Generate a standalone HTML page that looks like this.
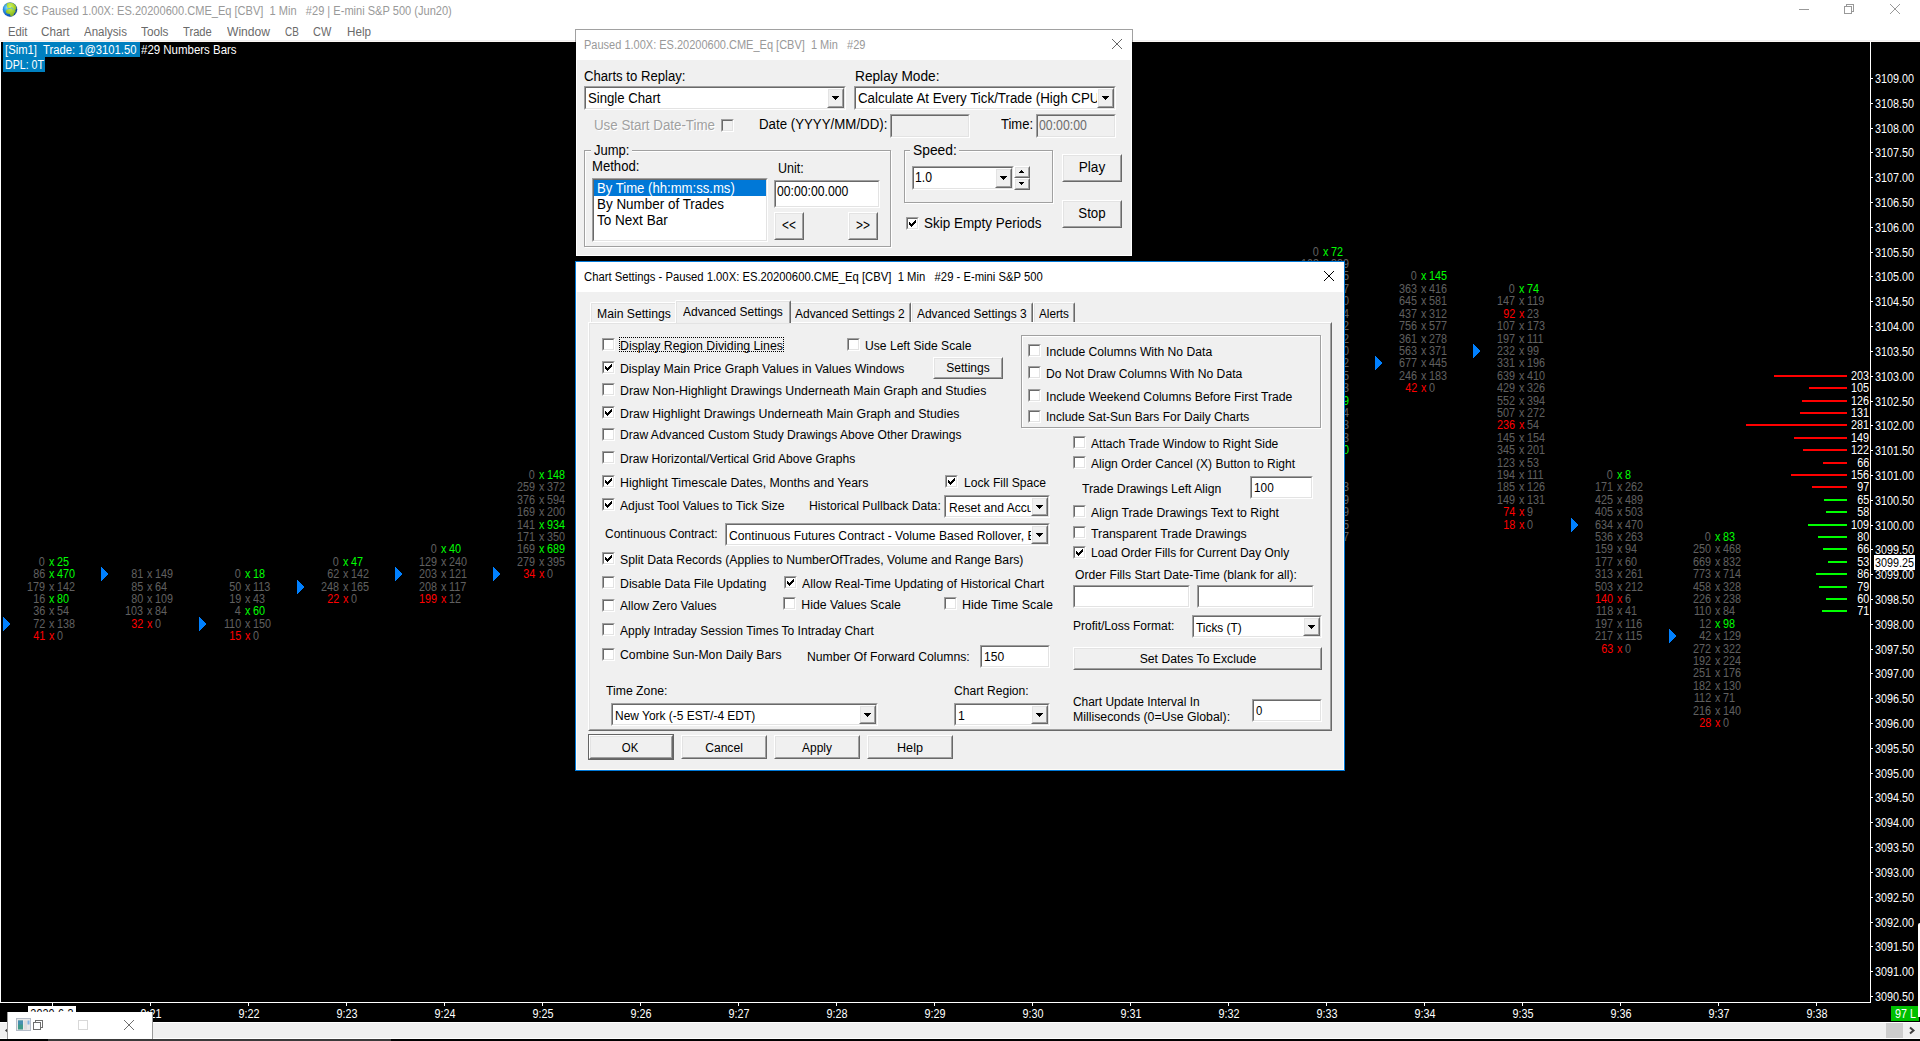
<!DOCTYPE html>
<html><head><meta charset="utf-8"><title>SC Paused 1.00X</title><style>
html,body{margin:0;padding:0;background:#000;}
body{width:1920px;height:1041px;overflow:hidden;position:relative;font-family:"Liberation Sans",sans-serif;}
.b{position:absolute;}
.t{position:absolute;white-space:pre;line-height:16px;display:inline-block;}
.sk{box-sizing:border-box;border:1px solid;border-color:#a0a0a0 #fff #fff #a0a0a0;}
.sk>div{width:100%;height:100%;box-sizing:border-box;border:1px solid;border-color:#696969 #e3e3e3 #e3e3e3 #696969;}
.rs{box-sizing:border-box;border:1px solid;border-color:#fff #696969 #696969 #fff;background:#f0f0f0}
.rs>div{width:100%;height:100%;box-sizing:border-box;border:1px solid;border-color:#e3e3e3 #a0a0a0 #a0a0a0 #e3e3e3;}
</style></head><body>
<div class="b" style="left:0;top:0;width:1920px;height:42px;background:#fff"></div>
<div class="b" style="left:0px;top:40px;width:1920px;height:1px;background:#f0f0f0;"></div>
<div class="b" style="left:0px;top:41px;width:1920px;height:1px;background:#fbf6f3;"></div>
<svg class="b" style="left:2px;top:1px" width="17" height="18" viewBox="0 0 17 18">
<defs>
<radialGradient id="gl" cx="0.32" cy="0.36" r="0.72"><stop offset="0" stop-color="#8fe0ff"/><stop offset="0.35" stop-color="#2f9be8"/><stop offset="0.75" stop-color="#0f5fc0"/><stop offset="1" stop-color="#0a3a92"/></radialGradient>
<radialGradient id="gg" cx="0.42" cy="0.3" r="0.8"><stop offset="0" stop-color="#d2f65a"/><stop offset="0.5" stop-color="#a4d02c"/><stop offset="1" stop-color="#6f9a1a"/></radialGradient>
<clipPath id="gc"><circle cx="8" cy="8.550" r="7.100"/></clipPath>
</defs>
<circle cx="8" cy="8.550" r="7.150" fill="url(#gl)"/>
<g clip-path="url(#gc)">
<path d="M5.0 2.2L7.0 1.2L10.0 1.2L12.6 2.6L14.3 5.4L14.5 7.8L13.7 8.4L13.3 9.6L13.7 10.9L12.4 11.9L11.6 14.0L10.6 15.7L8.7 16.0L8.3 14.2L7.8 12.9L6.0 12.7L4.3 11.9L3.8 10.2L4.7 8.7L6.0 8.2L5.6 7.2L5.0 5.6L4.8 3.6z" fill="url(#gg)"/>
<path d="M2.3 3.8L3.8 2.4L4.2 3.2L3.0 4.6z" fill="#a8d840" opacity="0.800"/>
<path d="M6.2 7.7L8.4 7.5L9.2 6.7L10.1 6.9L10.5 8.0L11.5 8.7" fill="none" stroke="#56b6de" stroke-width="1" stroke-linejoin="round" stroke-linecap="round"/>
<ellipse cx="8.2" cy="4.3" rx="0.700" ry="0.450" fill="#7fd0c8" opacity="0.700"/>
</g>
<circle cx="8" cy="8.550" r="7.100" fill="none" stroke="#1a4a9a" stroke-opacity="0.350" stroke-width="0.600"/>
</svg>
<span class="t" style="top:3px;font-size:12px;color:#999;left:23.4px;transform:scaleX(0.9218);transform-origin:0 50%;">SC Paused 1.00X: ES.20200600.CME_Eq [CBV]  1 Min   #29 | E-mini S&amp;P 500 (Jun20)</span>
<span class="t" style="top:24px;font-size:12px;color:#6a6a6a;left:7.5px;transform:scaleX(0.9382);transform-origin:0 50%;">Edit</span>
<span class="t" style="top:24px;font-size:12px;color:#6a6a6a;left:41.3px;transform:scaleX(0.9712);transform-origin:0 50%;">Chart</span>
<span class="t" style="top:24px;font-size:12px;color:#6a6a6a;left:84px;transform:scaleX(0.9601);transform-origin:0 50%;">Analysis</span>
<span class="t" style="top:24px;font-size:12px;color:#6a6a6a;left:141.3px;transform:scaleX(0.9816);transform-origin:0 50%;">Tools</span>
<span class="t" style="top:24px;font-size:12px;color:#6a6a6a;left:183.1px;transform:scaleX(0.9319);transform-origin:0 50%;">Trade</span>
<span class="t" style="top:24px;font-size:12px;color:#6a6a6a;left:226.8px;transform:scaleX(1.0075);transform-origin:0 50%;">Window</span>
<span class="t" style="top:24px;font-size:12px;color:#6a6a6a;left:284.7px;transform:scaleX(0.8278);transform-origin:0 50%;">CB</span>
<span class="t" style="top:24px;font-size:12px;color:#6a6a6a;left:313.4px;transform:scaleX(0.9154);transform-origin:0 50%;">CW</span>
<span class="t" style="top:24px;font-size:12px;color:#6a6a6a;left:346.6px;transform:scaleX(0.9724);transform-origin:0 50%;">Help</span>
<div class="b" style="left:1799px;top:9px;width:10px;height:1px;background:#999;"></div>
<svg class="b" style="left:1843px;top:3px" width="12" height="12" viewBox="0 0 12 12" shape-rendering="crispEdges"><path d="M3.500 3.500V1.500H10.500V8.500H8.500" fill="none" stroke="#999"/><rect x="1.500" y="3.500" width="7" height="7" fill="none" stroke="#999"/></svg>
<svg class="b" style="left:1889px;top:3px" width="12" height="12" viewBox="-6 -6 12 12"><path d="M-5 -5L5 5M5 -5L-5 5" stroke="#999" stroke-width="1" fill="none"/></svg>
<div class="b" style="left:0px;top:42px;width:1920px;height:980px;background:#000;"></div>
<div class="b" style="left:0px;top:42px;width:1px;height:961px;background:#fff;"></div>
<div class="b" style="left:3px;top:42px;width:137px;height:15px;background:#0080c0;"></div>
<div class="b" style="left:3px;top:57px;width:42px;height:15px;background:#0080c0;"></div>
<span class="t" style="top:42px;font-size:12px;color:#fff;left:4.8px;transform:scaleX(0.9375);transform-origin:0 50%;">[Sim1]  Trade: 1@3101.50</span>
<span class="t" style="top:42px;font-size:12px;color:#fff;left:141.3px;transform:scaleX(0.9556);transform-origin:0 50%;">#29 Numbers Bars</span>
<span class="t" style="top:57px;font-size:12px;color:#fff;left:4.8px;transform:scaleX(0.886);transform-origin:0 50%;">DPL: 0T</span>
<div class="b" style="left:1870px;top:42px;width:1px;height:961px;background:#fff;"></div>
<div class="b" style="left:1871px;top:78px;width:2px;height:1px;background:#fff;"></div>
<span class="t" style="top:71px;font-size:12px;color:#fff;left:1875px;transform:scaleX(0.8991);transform-origin:0 50%;">3109.00</span>
<div class="b" style="left:1871px;top:103px;width:2px;height:1px;background:#fff;"></div>
<span class="t" style="top:96px;font-size:12px;color:#fff;left:1875px;transform:scaleX(0.8991);transform-origin:0 50%;">3108.50</span>
<div class="b" style="left:1871px;top:128px;width:2px;height:1px;background:#fff;"></div>
<span class="t" style="top:121px;font-size:12px;color:#fff;left:1875px;transform:scaleX(0.8991);transform-origin:0 50%;">3108.00</span>
<div class="b" style="left:1871px;top:152px;width:2px;height:1px;background:#fff;"></div>
<span class="t" style="top:145px;font-size:12px;color:#fff;left:1875px;transform:scaleX(0.8991);transform-origin:0 50%;">3107.50</span>
<div class="b" style="left:1871px;top:177px;width:2px;height:1px;background:#fff;"></div>
<span class="t" style="top:170px;font-size:12px;color:#fff;left:1875px;transform:scaleX(0.8991);transform-origin:0 50%;">3107.00</span>
<div class="b" style="left:1871px;top:202px;width:2px;height:1px;background:#fff;"></div>
<span class="t" style="top:195px;font-size:12px;color:#fff;left:1875px;transform:scaleX(0.8991);transform-origin:0 50%;">3106.50</span>
<div class="b" style="left:1871px;top:227px;width:2px;height:1px;background:#fff;"></div>
<span class="t" style="top:220px;font-size:12px;color:#fff;left:1875px;transform:scaleX(0.8991);transform-origin:0 50%;">3106.00</span>
<div class="b" style="left:1871px;top:252px;width:2px;height:1px;background:#fff;"></div>
<span class="t" style="top:245px;font-size:12px;color:#fff;left:1875px;transform:scaleX(0.8991);transform-origin:0 50%;">3105.50</span>
<div class="b" style="left:1871px;top:276px;width:2px;height:1px;background:#fff;"></div>
<span class="t" style="top:269px;font-size:12px;color:#fff;left:1875px;transform:scaleX(0.8991);transform-origin:0 50%;">3105.00</span>
<div class="b" style="left:1871px;top:301px;width:2px;height:1px;background:#fff;"></div>
<span class="t" style="top:294px;font-size:12px;color:#fff;left:1875px;transform:scaleX(0.8991);transform-origin:0 50%;">3104.50</span>
<div class="b" style="left:1871px;top:326px;width:2px;height:1px;background:#fff;"></div>
<span class="t" style="top:319px;font-size:12px;color:#fff;left:1875px;transform:scaleX(0.8991);transform-origin:0 50%;">3104.00</span>
<div class="b" style="left:1871px;top:351px;width:2px;height:1px;background:#fff;"></div>
<span class="t" style="top:344px;font-size:12px;color:#fff;left:1875px;transform:scaleX(0.8991);transform-origin:0 50%;">3103.50</span>
<div class="b" style="left:1871px;top:376px;width:2px;height:1px;background:#fff;"></div>
<span class="t" style="top:369px;font-size:12px;color:#fff;left:1875px;transform:scaleX(0.8991);transform-origin:0 50%;">3103.00</span>
<div class="b" style="left:1871px;top:401px;width:2px;height:1px;background:#fff;"></div>
<span class="t" style="top:394px;font-size:12px;color:#fff;left:1875px;transform:scaleX(0.8991);transform-origin:0 50%;">3102.50</span>
<div class="b" style="left:1871px;top:425px;width:2px;height:1px;background:#fff;"></div>
<span class="t" style="top:418px;font-size:12px;color:#fff;left:1875px;transform:scaleX(0.8991);transform-origin:0 50%;">3102.00</span>
<div class="b" style="left:1871px;top:450px;width:2px;height:1px;background:#fff;"></div>
<span class="t" style="top:443px;font-size:12px;color:#fff;left:1875px;transform:scaleX(0.8991);transform-origin:0 50%;">3101.50</span>
<div class="b" style="left:1871px;top:475px;width:2px;height:1px;background:#fff;"></div>
<span class="t" style="top:468px;font-size:12px;color:#fff;left:1875px;transform:scaleX(0.8991);transform-origin:0 50%;">3101.00</span>
<div class="b" style="left:1871px;top:500px;width:2px;height:1px;background:#fff;"></div>
<span class="t" style="top:493px;font-size:12px;color:#fff;left:1875px;transform:scaleX(0.8991);transform-origin:0 50%;">3100.50</span>
<div class="b" style="left:1871px;top:525px;width:2px;height:1px;background:#fff;"></div>
<span class="t" style="top:518px;font-size:12px;color:#fff;left:1875px;transform:scaleX(0.8991);transform-origin:0 50%;">3100.00</span>
<div class="b" style="left:1871px;top:549px;width:2px;height:1px;background:#fff;"></div>
<span class="t" style="top:542px;font-size:12px;color:#fff;left:1875px;transform:scaleX(0.8991);transform-origin:0 50%;">3099.50</span>
<div class="b" style="left:1871px;top:574px;width:2px;height:1px;background:#fff;"></div>
<span class="t" style="top:567px;font-size:12px;color:#fff;left:1875px;transform:scaleX(0.8991);transform-origin:0 50%;">3099.00</span>
<div class="b" style="left:1871px;top:599px;width:2px;height:1px;background:#fff;"></div>
<span class="t" style="top:592px;font-size:12px;color:#fff;left:1875px;transform:scaleX(0.8991);transform-origin:0 50%;">3098.50</span>
<div class="b" style="left:1871px;top:624px;width:2px;height:1px;background:#fff;"></div>
<span class="t" style="top:617px;font-size:12px;color:#fff;left:1875px;transform:scaleX(0.8991);transform-origin:0 50%;">3098.00</span>
<div class="b" style="left:1871px;top:649px;width:2px;height:1px;background:#fff;"></div>
<span class="t" style="top:642px;font-size:12px;color:#fff;left:1875px;transform:scaleX(0.8991);transform-origin:0 50%;">3097.50</span>
<div class="b" style="left:1871px;top:673px;width:2px;height:1px;background:#fff;"></div>
<span class="t" style="top:666px;font-size:12px;color:#fff;left:1875px;transform:scaleX(0.8991);transform-origin:0 50%;">3097.00</span>
<div class="b" style="left:1871px;top:698px;width:2px;height:1px;background:#fff;"></div>
<span class="t" style="top:691px;font-size:12px;color:#fff;left:1875px;transform:scaleX(0.8991);transform-origin:0 50%;">3096.50</span>
<div class="b" style="left:1871px;top:723px;width:2px;height:1px;background:#fff;"></div>
<span class="t" style="top:716px;font-size:12px;color:#fff;left:1875px;transform:scaleX(0.8991);transform-origin:0 50%;">3096.00</span>
<div class="b" style="left:1871px;top:748px;width:2px;height:1px;background:#fff;"></div>
<span class="t" style="top:741px;font-size:12px;color:#fff;left:1875px;transform:scaleX(0.8991);transform-origin:0 50%;">3095.50</span>
<div class="b" style="left:1871px;top:773px;width:2px;height:1px;background:#fff;"></div>
<span class="t" style="top:766px;font-size:12px;color:#fff;left:1875px;transform:scaleX(0.8991);transform-origin:0 50%;">3095.00</span>
<div class="b" style="left:1871px;top:797px;width:2px;height:1px;background:#fff;"></div>
<span class="t" style="top:790px;font-size:12px;color:#fff;left:1875px;transform:scaleX(0.8991);transform-origin:0 50%;">3094.50</span>
<div class="b" style="left:1871px;top:822px;width:2px;height:1px;background:#fff;"></div>
<span class="t" style="top:815px;font-size:12px;color:#fff;left:1875px;transform:scaleX(0.8991);transform-origin:0 50%;">3094.00</span>
<div class="b" style="left:1871px;top:847px;width:2px;height:1px;background:#fff;"></div>
<span class="t" style="top:840px;font-size:12px;color:#fff;left:1875px;transform:scaleX(0.8991);transform-origin:0 50%;">3093.50</span>
<div class="b" style="left:1871px;top:872px;width:2px;height:1px;background:#fff;"></div>
<span class="t" style="top:865px;font-size:12px;color:#fff;left:1875px;transform:scaleX(0.8991);transform-origin:0 50%;">3093.00</span>
<div class="b" style="left:1871px;top:897px;width:2px;height:1px;background:#fff;"></div>
<span class="t" style="top:890px;font-size:12px;color:#fff;left:1875px;transform:scaleX(0.8991);transform-origin:0 50%;">3092.50</span>
<div class="b" style="left:1871px;top:922px;width:2px;height:1px;background:#fff;"></div>
<span class="t" style="top:915px;font-size:12px;color:#fff;left:1875px;transform:scaleX(0.8991);transform-origin:0 50%;">3092.00</span>
<div class="b" style="left:1871px;top:946px;width:2px;height:1px;background:#fff;"></div>
<span class="t" style="top:939px;font-size:12px;color:#fff;left:1875px;transform:scaleX(0.8991);transform-origin:0 50%;">3091.50</span>
<div class="b" style="left:1871px;top:971px;width:2px;height:1px;background:#fff;"></div>
<span class="t" style="top:964px;font-size:12px;color:#fff;left:1875px;transform:scaleX(0.8991);transform-origin:0 50%;">3091.00</span>
<div class="b" style="left:1871px;top:996px;width:2px;height:1px;background:#fff;"></div>
<span class="t" style="top:989px;font-size:12px;color:#fff;left:1875px;transform:scaleX(0.8991);transform-origin:0 50%;">3090.50</span>
<div class="b" style="left:1874px;top:555px;width:41px;height:15px;background:#fff;"></div>
<span class="t" style="top:555px;font-size:12px;color:#000;left:1875px;transform:scaleX(0.8991);transform-origin:0 50%;">3099.25</span>
<div class="b" style="left:0px;top:1002px;width:1871px;height:1px;background:#fff;"></div>
<div class="b" style="left:52px;top:1003px;width:1px;height:3px;background:#fff;"></div>
<div class="b" style="left:150px;top:1003px;width:1px;height:3px;background:#fff;"></div>
<span class="t" style="top:1006px;font-size:12px;color:#fff;left:1px;width:300px;text-align:center;transform:scaleX(0.9);transform-origin:50% 50%;">9:21</span>
<div class="b" style="left:248px;top:1003px;width:1px;height:3px;background:#fff;"></div>
<span class="t" style="top:1006px;font-size:12px;color:#fff;left:99px;width:300px;text-align:center;transform:scaleX(0.9);transform-origin:50% 50%;">9:22</span>
<div class="b" style="left:346px;top:1003px;width:1px;height:3px;background:#fff;"></div>
<span class="t" style="top:1006px;font-size:12px;color:#fff;left:197px;width:300px;text-align:center;transform:scaleX(0.9);transform-origin:50% 50%;">9:23</span>
<div class="b" style="left:444px;top:1003px;width:1px;height:3px;background:#fff;"></div>
<span class="t" style="top:1006px;font-size:12px;color:#fff;left:295px;width:300px;text-align:center;transform:scaleX(0.9);transform-origin:50% 50%;">9:24</span>
<div class="b" style="left:542px;top:1003px;width:1px;height:3px;background:#fff;"></div>
<span class="t" style="top:1006px;font-size:12px;color:#fff;left:393px;width:300px;text-align:center;transform:scaleX(0.9);transform-origin:50% 50%;">9:25</span>
<div class="b" style="left:640px;top:1003px;width:1px;height:3px;background:#fff;"></div>
<span class="t" style="top:1006px;font-size:12px;color:#fff;left:491px;width:300px;text-align:center;transform:scaleX(0.9);transform-origin:50% 50%;">9:26</span>
<div class="b" style="left:738px;top:1003px;width:1px;height:3px;background:#fff;"></div>
<span class="t" style="top:1006px;font-size:12px;color:#fff;left:589px;width:300px;text-align:center;transform:scaleX(0.9);transform-origin:50% 50%;">9:27</span>
<div class="b" style="left:836px;top:1003px;width:1px;height:3px;background:#fff;"></div>
<span class="t" style="top:1006px;font-size:12px;color:#fff;left:687px;width:300px;text-align:center;transform:scaleX(0.9);transform-origin:50% 50%;">9:28</span>
<div class="b" style="left:934px;top:1003px;width:1px;height:3px;background:#fff;"></div>
<span class="t" style="top:1006px;font-size:12px;color:#fff;left:785px;width:300px;text-align:center;transform:scaleX(0.9);transform-origin:50% 50%;">9:29</span>
<div class="b" style="left:1032px;top:1003px;width:1px;height:3px;background:#fff;"></div>
<span class="t" style="top:1006px;font-size:12px;color:#fff;left:883px;width:300px;text-align:center;transform:scaleX(0.9);transform-origin:50% 50%;">9:30</span>
<div class="b" style="left:1130px;top:1003px;width:1px;height:3px;background:#fff;"></div>
<span class="t" style="top:1006px;font-size:12px;color:#fff;left:981px;width:300px;text-align:center;transform:scaleX(0.9);transform-origin:50% 50%;">9:31</span>
<div class="b" style="left:1228px;top:1003px;width:1px;height:3px;background:#fff;"></div>
<span class="t" style="top:1006px;font-size:12px;color:#fff;left:1079px;width:300px;text-align:center;transform:scaleX(0.9);transform-origin:50% 50%;">9:32</span>
<div class="b" style="left:1326px;top:1003px;width:1px;height:3px;background:#fff;"></div>
<span class="t" style="top:1006px;font-size:12px;color:#fff;left:1177px;width:300px;text-align:center;transform:scaleX(0.9);transform-origin:50% 50%;">9:33</span>
<div class="b" style="left:1424px;top:1003px;width:1px;height:3px;background:#fff;"></div>
<span class="t" style="top:1006px;font-size:12px;color:#fff;left:1275px;width:300px;text-align:center;transform:scaleX(0.9);transform-origin:50% 50%;">9:34</span>
<div class="b" style="left:1522px;top:1003px;width:1px;height:3px;background:#fff;"></div>
<span class="t" style="top:1006px;font-size:12px;color:#fff;left:1373px;width:300px;text-align:center;transform:scaleX(0.9);transform-origin:50% 50%;">9:35</span>
<div class="b" style="left:1620px;top:1003px;width:1px;height:3px;background:#fff;"></div>
<span class="t" style="top:1006px;font-size:12px;color:#fff;left:1471px;width:300px;text-align:center;transform:scaleX(0.9);transform-origin:50% 50%;">9:36</span>
<div class="b" style="left:1718px;top:1003px;width:1px;height:3px;background:#fff;"></div>
<span class="t" style="top:1006px;font-size:12px;color:#fff;left:1569px;width:300px;text-align:center;transform:scaleX(0.9);transform-origin:50% 50%;">9:37</span>
<div class="b" style="left:1816px;top:1003px;width:1px;height:3px;background:#fff;"></div>
<span class="t" style="top:1006px;font-size:12px;color:#fff;left:1667px;width:300px;text-align:center;transform:scaleX(0.9);transform-origin:50% 50%;">9:38</span>
<div class="b" style="left:28px;top:1006px;width:48px;height:16px;background:#fff;"></div>
<span class="t" style="top:1006px;font-size:12px;color:#000;left:-98px;width:300px;text-align:center;transform:scaleX(0.9);transform-origin:50% 50%;">2020-6-3</span>
<div class="b" style="left:1891px;top:1006px;width:28px;height:15px;background:#00c000;"></div>
<span class="t" style="top:1006px;font-size:12px;color:#fff;left:1895px;transform:scaleX(0.8948);transform-origin:0 50%;">97 L</span>
<div class="b" style="left:0px;top:1022px;width:1920px;height:17px;background:#f0f0f0;"></div>
<div class="b" style="left:0px;top:1022px;width:1920px;height:1px;background:#fff;"></div>
<div class="b" style="left:0px;top:1038px;width:1920px;height:1px;background:#fff;"></div>
<div class="b" style="left:1886px;top:1023px;width:17px;height:15px;background:#cdcdcd;"></div>
<svg class="b" style="left:1907px;top:1025px" width="10" height="11" viewBox="0 0 10 11"><path d="M3 2.500L6.500 5.500L3 8.500" fill="none" stroke="#404040" stroke-width="2"/></svg>
<svg class="b" style="left:3px;top:1025px" width="10" height="11" viewBox="0 0 10 11"><path d="M7 2.500L3.500 5.500L7 8.500" fill="none" stroke="#404040" stroke-width="2"/></svg>
<div class="b" style="left:0px;top:1039px;width:1920px;height:2px;background:#000;"></div>
<div class="b" style="left:48px;top:1039px;width:343px;height:2px;background:#3a3a3a;"></div>
<div class="b" style="left:1918px;top:923px;width:2px;height:94px;background:#fff;border-radius:2px 0 0 0"></div>
<span class="t" style="top:554px;font-size:12px;color:#606060;right:1875px;transform:scaleX(0.9);transform-origin:100% 50%;">0</span>
<span class="t" style="top:554px;font-size:12px;color:#00ff00;left:49px;transform:scaleX(0.9);transform-origin:0 50%;">x</span>
<span class="t" style="top:554px;font-size:12px;color:#00ff00;left:57px;transform:scaleX(0.9);transform-origin:0 50%;">25</span>
<span class="t" style="top:566px;font-size:12px;color:#606060;right:1875px;transform:scaleX(0.9);transform-origin:100% 50%;">86</span>
<span class="t" style="top:566px;font-size:12px;color:#00ff00;left:49px;transform:scaleX(0.9);transform-origin:0 50%;">x</span>
<span class="t" style="top:566px;font-size:12px;color:#00ff00;left:57px;transform:scaleX(0.9);transform-origin:0 50%;">470</span>
<span class="t" style="top:579px;font-size:12px;color:#606060;right:1875px;transform:scaleX(0.9);transform-origin:100% 50%;">179</span>
<span class="t" style="top:579px;font-size:12px;color:#606060;left:49px;transform:scaleX(0.9);transform-origin:0 50%;">x</span>
<span class="t" style="top:579px;font-size:12px;color:#606060;left:57px;transform:scaleX(0.9);transform-origin:0 50%;">142</span>
<span class="t" style="top:591px;font-size:12px;color:#606060;right:1875px;transform:scaleX(0.9);transform-origin:100% 50%;">16</span>
<span class="t" style="top:591px;font-size:12px;color:#00ff00;left:49px;transform:scaleX(0.9);transform-origin:0 50%;">x</span>
<span class="t" style="top:591px;font-size:12px;color:#00ff00;left:57px;transform:scaleX(0.9);transform-origin:0 50%;">80</span>
<span class="t" style="top:603px;font-size:12px;color:#606060;right:1875px;transform:scaleX(0.9);transform-origin:100% 50%;">36</span>
<span class="t" style="top:603px;font-size:12px;color:#606060;left:49px;transform:scaleX(0.9);transform-origin:0 50%;">x</span>
<span class="t" style="top:603px;font-size:12px;color:#606060;left:57px;transform:scaleX(0.9);transform-origin:0 50%;">54</span>
<span class="t" style="top:616px;font-size:12px;color:#606060;right:1875px;transform:scaleX(0.9);transform-origin:100% 50%;">72</span>
<span class="t" style="top:616px;font-size:12px;color:#606060;left:49px;transform:scaleX(0.9);transform-origin:0 50%;">x</span>
<span class="t" style="top:616px;font-size:12px;color:#606060;left:57px;transform:scaleX(0.9);transform-origin:0 50%;">138</span>
<span class="t" style="top:628px;font-size:12px;color:#ff0000;right:1875px;transform:scaleX(0.9);transform-origin:100% 50%;">41</span>
<span class="t" style="top:628px;font-size:12px;color:#ff0000;left:49px;transform:scaleX(0.9);transform-origin:0 50%;">x</span>
<span class="t" style="top:628px;font-size:12px;color:#606060;left:57px;transform:scaleX(0.9);transform-origin:0 50%;">0</span>
<svg class="b" style="left:3px;top:617px" width="7" height="14" viewBox="0 0 7 14" shape-rendering="crispEdges"><path d="M0 0h1v1h1v1h1v1h1v1h1v1h1v1h1v2h-1v1h-1v1h-1v1h-1v1h-1v1h-1v1h-1z" fill="#0080ff"/></svg>
<span class="t" style="top:566px;font-size:12px;color:#606060;right:1777px;transform:scaleX(0.9);transform-origin:100% 50%;">81</span>
<span class="t" style="top:566px;font-size:12px;color:#606060;left:147px;transform:scaleX(0.9);transform-origin:0 50%;">x</span>
<span class="t" style="top:566px;font-size:12px;color:#606060;left:155px;transform:scaleX(0.9);transform-origin:0 50%;">149</span>
<span class="t" style="top:579px;font-size:12px;color:#606060;right:1777px;transform:scaleX(0.9);transform-origin:100% 50%;">85</span>
<span class="t" style="top:579px;font-size:12px;color:#606060;left:147px;transform:scaleX(0.9);transform-origin:0 50%;">x</span>
<span class="t" style="top:579px;font-size:12px;color:#606060;left:155px;transform:scaleX(0.9);transform-origin:0 50%;">64</span>
<span class="t" style="top:591px;font-size:12px;color:#606060;right:1777px;transform:scaleX(0.9);transform-origin:100% 50%;">80</span>
<span class="t" style="top:591px;font-size:12px;color:#606060;left:147px;transform:scaleX(0.9);transform-origin:0 50%;">x</span>
<span class="t" style="top:591px;font-size:12px;color:#606060;left:155px;transform:scaleX(0.9);transform-origin:0 50%;">109</span>
<span class="t" style="top:603px;font-size:12px;color:#606060;right:1777px;transform:scaleX(0.9);transform-origin:100% 50%;">103</span>
<span class="t" style="top:603px;font-size:12px;color:#606060;left:147px;transform:scaleX(0.9);transform-origin:0 50%;">x</span>
<span class="t" style="top:603px;font-size:12px;color:#606060;left:155px;transform:scaleX(0.9);transform-origin:0 50%;">84</span>
<span class="t" style="top:616px;font-size:12px;color:#ff0000;right:1777px;transform:scaleX(0.9);transform-origin:100% 50%;">32</span>
<span class="t" style="top:616px;font-size:12px;color:#ff0000;left:147px;transform:scaleX(0.9);transform-origin:0 50%;">x</span>
<span class="t" style="top:616px;font-size:12px;color:#606060;left:155px;transform:scaleX(0.9);transform-origin:0 50%;">0</span>
<svg class="b" style="left:101px;top:567px" width="7" height="14" viewBox="0 0 7 14" shape-rendering="crispEdges"><path d="M0 0h1v1h1v1h1v1h1v1h1v1h1v1h1v2h-1v1h-1v1h-1v1h-1v1h-1v1h-1v1h-1z" fill="#0080ff"/></svg>
<span class="t" style="top:566px;font-size:12px;color:#606060;right:1679px;transform:scaleX(0.9);transform-origin:100% 50%;">0</span>
<span class="t" style="top:566px;font-size:12px;color:#00ff00;left:245px;transform:scaleX(0.9);transform-origin:0 50%;">x</span>
<span class="t" style="top:566px;font-size:12px;color:#00ff00;left:253px;transform:scaleX(0.9);transform-origin:0 50%;">18</span>
<span class="t" style="top:579px;font-size:12px;color:#606060;right:1679px;transform:scaleX(0.9);transform-origin:100% 50%;">50</span>
<span class="t" style="top:579px;font-size:12px;color:#606060;left:245px;transform:scaleX(0.9);transform-origin:0 50%;">x</span>
<span class="t" style="top:579px;font-size:12px;color:#606060;left:253px;transform:scaleX(0.9);transform-origin:0 50%;">113</span>
<span class="t" style="top:591px;font-size:12px;color:#606060;right:1679px;transform:scaleX(0.9);transform-origin:100% 50%;">19</span>
<span class="t" style="top:591px;font-size:12px;color:#606060;left:245px;transform:scaleX(0.9);transform-origin:0 50%;">x</span>
<span class="t" style="top:591px;font-size:12px;color:#606060;left:253px;transform:scaleX(0.9);transform-origin:0 50%;">43</span>
<span class="t" style="top:603px;font-size:12px;color:#606060;right:1679px;transform:scaleX(0.9);transform-origin:100% 50%;">4</span>
<span class="t" style="top:603px;font-size:12px;color:#00ff00;left:245px;transform:scaleX(0.9);transform-origin:0 50%;">x</span>
<span class="t" style="top:603px;font-size:12px;color:#00ff00;left:253px;transform:scaleX(0.9);transform-origin:0 50%;">60</span>
<span class="t" style="top:616px;font-size:12px;color:#606060;right:1679px;transform:scaleX(0.9);transform-origin:100% 50%;">110</span>
<span class="t" style="top:616px;font-size:12px;color:#606060;left:245px;transform:scaleX(0.9);transform-origin:0 50%;">x</span>
<span class="t" style="top:616px;font-size:12px;color:#606060;left:253px;transform:scaleX(0.9);transform-origin:0 50%;">150</span>
<span class="t" style="top:628px;font-size:12px;color:#ff0000;right:1679px;transform:scaleX(0.9);transform-origin:100% 50%;">15</span>
<span class="t" style="top:628px;font-size:12px;color:#ff0000;left:245px;transform:scaleX(0.9);transform-origin:0 50%;">x</span>
<span class="t" style="top:628px;font-size:12px;color:#606060;left:253px;transform:scaleX(0.9);transform-origin:0 50%;">0</span>
<svg class="b" style="left:199px;top:617px" width="7" height="14" viewBox="0 0 7 14" shape-rendering="crispEdges"><path d="M0 0h1v1h1v1h1v1h1v1h1v1h1v1h1v2h-1v1h-1v1h-1v1h-1v1h-1v1h-1v1h-1z" fill="#0080ff"/></svg>
<span class="t" style="top:554px;font-size:12px;color:#606060;right:1581px;transform:scaleX(0.9);transform-origin:100% 50%;">0</span>
<span class="t" style="top:554px;font-size:12px;color:#00ff00;left:343px;transform:scaleX(0.9);transform-origin:0 50%;">x</span>
<span class="t" style="top:554px;font-size:12px;color:#00ff00;left:351px;transform:scaleX(0.9);transform-origin:0 50%;">47</span>
<span class="t" style="top:566px;font-size:12px;color:#606060;right:1581px;transform:scaleX(0.9);transform-origin:100% 50%;">62</span>
<span class="t" style="top:566px;font-size:12px;color:#606060;left:343px;transform:scaleX(0.9);transform-origin:0 50%;">x</span>
<span class="t" style="top:566px;font-size:12px;color:#606060;left:351px;transform:scaleX(0.9);transform-origin:0 50%;">142</span>
<span class="t" style="top:579px;font-size:12px;color:#606060;right:1581px;transform:scaleX(0.9);transform-origin:100% 50%;">248</span>
<span class="t" style="top:579px;font-size:12px;color:#606060;left:343px;transform:scaleX(0.9);transform-origin:0 50%;">x</span>
<span class="t" style="top:579px;font-size:12px;color:#606060;left:351px;transform:scaleX(0.9);transform-origin:0 50%;">165</span>
<span class="t" style="top:591px;font-size:12px;color:#ff0000;right:1581px;transform:scaleX(0.9);transform-origin:100% 50%;">22</span>
<span class="t" style="top:591px;font-size:12px;color:#ff0000;left:343px;transform:scaleX(0.9);transform-origin:0 50%;">x</span>
<span class="t" style="top:591px;font-size:12px;color:#606060;left:351px;transform:scaleX(0.9);transform-origin:0 50%;">0</span>
<svg class="b" style="left:297px;top:580px" width="7" height="14" viewBox="0 0 7 14" shape-rendering="crispEdges"><path d="M0 0h1v1h1v1h1v1h1v1h1v1h1v1h1v2h-1v1h-1v1h-1v1h-1v1h-1v1h-1v1h-1z" fill="#0080ff"/></svg>
<span class="t" style="top:541px;font-size:12px;color:#606060;right:1483px;transform:scaleX(0.9);transform-origin:100% 50%;">0</span>
<span class="t" style="top:541px;font-size:12px;color:#00ff00;left:441px;transform:scaleX(0.9);transform-origin:0 50%;">x</span>
<span class="t" style="top:541px;font-size:12px;color:#00ff00;left:449px;transform:scaleX(0.9);transform-origin:0 50%;">40</span>
<span class="t" style="top:554px;font-size:12px;color:#606060;right:1483px;transform:scaleX(0.9);transform-origin:100% 50%;">129</span>
<span class="t" style="top:554px;font-size:12px;color:#606060;left:441px;transform:scaleX(0.9);transform-origin:0 50%;">x</span>
<span class="t" style="top:554px;font-size:12px;color:#606060;left:449px;transform:scaleX(0.9);transform-origin:0 50%;">240</span>
<span class="t" style="top:566px;font-size:12px;color:#606060;right:1483px;transform:scaleX(0.9);transform-origin:100% 50%;">203</span>
<span class="t" style="top:566px;font-size:12px;color:#606060;left:441px;transform:scaleX(0.9);transform-origin:0 50%;">x</span>
<span class="t" style="top:566px;font-size:12px;color:#606060;left:449px;transform:scaleX(0.9);transform-origin:0 50%;">121</span>
<span class="t" style="top:579px;font-size:12px;color:#606060;right:1483px;transform:scaleX(0.9);transform-origin:100% 50%;">208</span>
<span class="t" style="top:579px;font-size:12px;color:#606060;left:441px;transform:scaleX(0.9);transform-origin:0 50%;">x</span>
<span class="t" style="top:579px;font-size:12px;color:#606060;left:449px;transform:scaleX(0.9);transform-origin:0 50%;">117</span>
<span class="t" style="top:591px;font-size:12px;color:#ff0000;right:1483px;transform:scaleX(0.9);transform-origin:100% 50%;">199</span>
<span class="t" style="top:591px;font-size:12px;color:#ff0000;left:441px;transform:scaleX(0.9);transform-origin:0 50%;">x</span>
<span class="t" style="top:591px;font-size:12px;color:#606060;left:449px;transform:scaleX(0.9);transform-origin:0 50%;">12</span>
<svg class="b" style="left:395px;top:567px" width="7" height="14" viewBox="0 0 7 14" shape-rendering="crispEdges"><path d="M0 0h1v1h1v1h1v1h1v1h1v1h1v1h1v2h-1v1h-1v1h-1v1h-1v1h-1v1h-1v1h-1z" fill="#0080ff"/></svg>
<span class="t" style="top:467px;font-size:12px;color:#606060;right:1385px;transform:scaleX(0.9);transform-origin:100% 50%;">0</span>
<span class="t" style="top:467px;font-size:12px;color:#00ff00;left:539px;transform:scaleX(0.9);transform-origin:0 50%;">x</span>
<span class="t" style="top:467px;font-size:12px;color:#00ff00;left:547px;transform:scaleX(0.9);transform-origin:0 50%;">148</span>
<span class="t" style="top:479px;font-size:12px;color:#606060;right:1385px;transform:scaleX(0.9);transform-origin:100% 50%;">259</span>
<span class="t" style="top:479px;font-size:12px;color:#606060;left:539px;transform:scaleX(0.9);transform-origin:0 50%;">x</span>
<span class="t" style="top:479px;font-size:12px;color:#606060;left:547px;transform:scaleX(0.9);transform-origin:0 50%;">372</span>
<span class="t" style="top:492px;font-size:12px;color:#606060;right:1385px;transform:scaleX(0.9);transform-origin:100% 50%;">376</span>
<span class="t" style="top:492px;font-size:12px;color:#606060;left:539px;transform:scaleX(0.9);transform-origin:0 50%;">x</span>
<span class="t" style="top:492px;font-size:12px;color:#606060;left:547px;transform:scaleX(0.9);transform-origin:0 50%;">594</span>
<span class="t" style="top:504px;font-size:12px;color:#606060;right:1385px;transform:scaleX(0.9);transform-origin:100% 50%;">169</span>
<span class="t" style="top:504px;font-size:12px;color:#606060;left:539px;transform:scaleX(0.9);transform-origin:0 50%;">x</span>
<span class="t" style="top:504px;font-size:12px;color:#606060;left:547px;transform:scaleX(0.9);transform-origin:0 50%;">200</span>
<span class="t" style="top:517px;font-size:12px;color:#606060;right:1385px;transform:scaleX(0.9);transform-origin:100% 50%;">141</span>
<span class="t" style="top:517px;font-size:12px;color:#00ff00;left:539px;transform:scaleX(0.9);transform-origin:0 50%;">x</span>
<span class="t" style="top:517px;font-size:12px;color:#00ff00;left:547px;transform:scaleX(0.9);transform-origin:0 50%;">934</span>
<span class="t" style="top:529px;font-size:12px;color:#606060;right:1385px;transform:scaleX(0.9);transform-origin:100% 50%;">171</span>
<span class="t" style="top:529px;font-size:12px;color:#606060;left:539px;transform:scaleX(0.9);transform-origin:0 50%;">x</span>
<span class="t" style="top:529px;font-size:12px;color:#606060;left:547px;transform:scaleX(0.9);transform-origin:0 50%;">350</span>
<span class="t" style="top:541px;font-size:12px;color:#606060;right:1385px;transform:scaleX(0.9);transform-origin:100% 50%;">169</span>
<span class="t" style="top:541px;font-size:12px;color:#00ff00;left:539px;transform:scaleX(0.9);transform-origin:0 50%;">x</span>
<span class="t" style="top:541px;font-size:12px;color:#00ff00;left:547px;transform:scaleX(0.9);transform-origin:0 50%;">689</span>
<span class="t" style="top:554px;font-size:12px;color:#606060;right:1385px;transform:scaleX(0.9);transform-origin:100% 50%;">279</span>
<span class="t" style="top:554px;font-size:12px;color:#606060;left:539px;transform:scaleX(0.9);transform-origin:0 50%;">x</span>
<span class="t" style="top:554px;font-size:12px;color:#606060;left:547px;transform:scaleX(0.9);transform-origin:0 50%;">395</span>
<span class="t" style="top:566px;font-size:12px;color:#ff0000;right:1385px;transform:scaleX(0.9);transform-origin:100% 50%;">34</span>
<span class="t" style="top:566px;font-size:12px;color:#ff0000;left:539px;transform:scaleX(0.9);transform-origin:0 50%;">x</span>
<span class="t" style="top:566px;font-size:12px;color:#606060;left:547px;transform:scaleX(0.9);transform-origin:0 50%;">0</span>
<svg class="b" style="left:493px;top:567px" width="7" height="14" viewBox="0 0 7 14" shape-rendering="crispEdges"><path d="M0 0h1v1h1v1h1v1h1v1h1v1h1v1h1v2h-1v1h-1v1h-1v1h-1v1h-1v1h-1v1h-1z" fill="#0080ff"/></svg>
<span class="t" style="top:244px;font-size:12px;color:#606060;right:601px;transform:scaleX(0.9);transform-origin:100% 50%;">0</span>
<span class="t" style="top:244px;font-size:12px;color:#00ff00;left:1323px;transform:scaleX(0.9);transform-origin:0 50%;">x</span>
<span class="t" style="top:244px;font-size:12px;color:#00ff00;left:1331px;transform:scaleX(0.9);transform-origin:0 50%;">72</span>
<span class="t" style="top:256px;font-size:12px;color:#606060;right:601px;transform:scaleX(0.9);transform-origin:100% 50%;">103</span>
<span class="t" style="top:256px;font-size:12px;color:#606060;left:1323px;transform:scaleX(0.9);transform-origin:0 50%;">x</span>
<span class="t" style="top:256px;font-size:12px;color:#606060;left:1331px;transform:scaleX(0.9);transform-origin:0 50%;">339</span>
<span class="t" style="top:268px;font-size:12px;color:#606060;right:601px;transform:scaleX(0.9);transform-origin:100% 50%;">310</span>
<span class="t" style="top:268px;font-size:12px;color:#606060;left:1323px;transform:scaleX(0.9);transform-origin:0 50%;">x</span>
<span class="t" style="top:268px;font-size:12px;color:#606060;left:1331px;transform:scaleX(0.9);transform-origin:0 50%;">455</span>
<span class="t" style="top:281px;font-size:12px;color:#606060;right:601px;transform:scaleX(0.9);transform-origin:100% 50%;">412</span>
<span class="t" style="top:281px;font-size:12px;color:#606060;left:1323px;transform:scaleX(0.9);transform-origin:0 50%;">x</span>
<span class="t" style="top:281px;font-size:12px;color:#606060;left:1331px;transform:scaleX(0.9);transform-origin:0 50%;">387</span>
<span class="t" style="top:293px;font-size:12px;color:#606060;right:601px;transform:scaleX(0.9);transform-origin:100% 50%;">520</span>
<span class="t" style="top:293px;font-size:12px;color:#606060;left:1323px;transform:scaleX(0.9);transform-origin:0 50%;">x</span>
<span class="t" style="top:293px;font-size:12px;color:#606060;left:1331px;transform:scaleX(0.9);transform-origin:0 50%;">610</span>
<span class="t" style="top:306px;font-size:12px;color:#606060;right:601px;transform:scaleX(0.9);transform-origin:100% 50%;">388</span>
<span class="t" style="top:306px;font-size:12px;color:#606060;left:1323px;transform:scaleX(0.9);transform-origin:0 50%;">x</span>
<span class="t" style="top:306px;font-size:12px;color:#606060;left:1331px;transform:scaleX(0.9);transform-origin:0 50%;">274</span>
<span class="t" style="top:318px;font-size:12px;color:#606060;right:601px;transform:scaleX(0.9);transform-origin:100% 50%;">611</span>
<span class="t" style="top:318px;font-size:12px;color:#606060;left:1323px;transform:scaleX(0.9);transform-origin:0 50%;">x</span>
<span class="t" style="top:318px;font-size:12px;color:#606060;left:1331px;transform:scaleX(0.9);transform-origin:0 50%;">502</span>
<span class="t" style="top:331px;font-size:12px;color:#606060;right:601px;transform:scaleX(0.9);transform-origin:100% 50%;">455</span>
<span class="t" style="top:331px;font-size:12px;color:#606060;left:1323px;transform:scaleX(0.9);transform-origin:0 50%;">x</span>
<span class="t" style="top:331px;font-size:12px;color:#606060;left:1331px;transform:scaleX(0.9);transform-origin:0 50%;">392</span>
<span class="t" style="top:343px;font-size:12px;color:#606060;right:601px;transform:scaleX(0.9);transform-origin:100% 50%;">390</span>
<span class="t" style="top:343px;font-size:12px;color:#606060;left:1323px;transform:scaleX(0.9);transform-origin:0 50%;">x</span>
<span class="t" style="top:343px;font-size:12px;color:#606060;left:1331px;transform:scaleX(0.9);transform-origin:0 50%;">420</span>
<span class="t" style="top:355px;font-size:12px;color:#606060;right:601px;transform:scaleX(0.9);transform-origin:100% 50%;">512</span>
<span class="t" style="top:355px;font-size:12px;color:#606060;left:1323px;transform:scaleX(0.9);transform-origin:0 50%;">x</span>
<span class="t" style="top:355px;font-size:12px;color:#606060;left:1331px;transform:scaleX(0.9);transform-origin:0 50%;">372</span>
<span class="t" style="top:368px;font-size:12px;color:#606060;right:601px;transform:scaleX(0.9);transform-origin:100% 50%;">480</span>
<span class="t" style="top:368px;font-size:12px;color:#606060;left:1323px;transform:scaleX(0.9);transform-origin:0 50%;">x</span>
<span class="t" style="top:368px;font-size:12px;color:#606060;left:1331px;transform:scaleX(0.9);transform-origin:0 50%;">335</span>
<span class="t" style="top:380px;font-size:12px;color:#606060;right:601px;transform:scaleX(0.9);transform-origin:100% 50%;">333</span>
<span class="t" style="top:380px;font-size:12px;color:#606060;left:1323px;transform:scaleX(0.9);transform-origin:0 50%;">x</span>
<span class="t" style="top:380px;font-size:12px;color:#606060;left:1331px;transform:scaleX(0.9);transform-origin:0 50%;">213</span>
<span class="t" style="top:393px;font-size:12px;color:#606060;right:601px;transform:scaleX(0.9);transform-origin:100% 50%;">120</span>
<span class="t" style="top:393px;font-size:12px;color:#00ff00;left:1323px;transform:scaleX(0.9);transform-origin:0 50%;">x</span>
<span class="t" style="top:393px;font-size:12px;color:#00ff00;left:1331px;transform:scaleX(0.9);transform-origin:0 50%;">409</span>
<span class="t" style="top:405px;font-size:12px;color:#606060;right:601px;transform:scaleX(0.9);transform-origin:100% 50%;">402</span>
<span class="t" style="top:405px;font-size:12px;color:#606060;left:1323px;transform:scaleX(0.9);transform-origin:0 50%;">x</span>
<span class="t" style="top:405px;font-size:12px;color:#606060;left:1331px;transform:scaleX(0.9);transform-origin:0 50%;">314</span>
<span class="t" style="top:417px;font-size:12px;color:#606060;right:601px;transform:scaleX(0.9);transform-origin:100% 50%;">350</span>
<span class="t" style="top:417px;font-size:12px;color:#606060;left:1323px;transform:scaleX(0.9);transform-origin:0 50%;">x</span>
<span class="t" style="top:417px;font-size:12px;color:#606060;left:1331px;transform:scaleX(0.9);transform-origin:0 50%;">283</span>
<span class="t" style="top:430px;font-size:12px;color:#606060;right:601px;transform:scaleX(0.9);transform-origin:100% 50%;">377</span>
<span class="t" style="top:430px;font-size:12px;color:#606060;left:1323px;transform:scaleX(0.9);transform-origin:0 50%;">x</span>
<span class="t" style="top:430px;font-size:12px;color:#606060;left:1331px;transform:scaleX(0.9);transform-origin:0 50%;">263</span>
<span class="t" style="top:442px;font-size:12px;color:#606060;right:601px;transform:scaleX(0.9);transform-origin:100% 50%;">98</span>
<span class="t" style="top:442px;font-size:12px;color:#00ff00;left:1323px;transform:scaleX(0.9);transform-origin:0 50%;">x</span>
<span class="t" style="top:442px;font-size:12px;color:#00ff00;left:1331px;transform:scaleX(0.9);transform-origin:0 50%;">410</span>
<span class="t" style="top:455px;font-size:12px;color:#606060;right:601px;transform:scaleX(0.9);transform-origin:100% 50%;">260</span>
<span class="t" style="top:455px;font-size:12px;color:#606060;left:1323px;transform:scaleX(0.9);transform-origin:0 50%;">x</span>
<span class="t" style="top:455px;font-size:12px;color:#606060;left:1331px;transform:scaleX(0.9);transform-origin:0 50%;">0</span>
<span class="t" style="top:467px;font-size:12px;color:#606060;right:601px;transform:scaleX(0.9);transform-origin:100% 50%;">245</span>
<span class="t" style="top:467px;font-size:12px;color:#606060;left:1323px;transform:scaleX(0.9);transform-origin:0 50%;">x</span>
<span class="t" style="top:467px;font-size:12px;color:#606060;left:1331px;transform:scaleX(0.9);transform-origin:0 50%;">0</span>
<span class="t" style="top:479px;font-size:12px;color:#606060;right:601px;transform:scaleX(0.9);transform-origin:100% 50%;">301</span>
<span class="t" style="top:479px;font-size:12px;color:#606060;left:1323px;transform:scaleX(0.9);transform-origin:0 50%;">x</span>
<span class="t" style="top:479px;font-size:12px;color:#606060;left:1331px;transform:scaleX(0.9);transform-origin:0 50%;">253</span>
<span class="t" style="top:492px;font-size:12px;color:#606060;right:601px;transform:scaleX(0.9);transform-origin:100% 50%;">402</span>
<span class="t" style="top:492px;font-size:12px;color:#606060;left:1323px;transform:scaleX(0.9);transform-origin:0 50%;">x</span>
<span class="t" style="top:492px;font-size:12px;color:#606060;left:1331px;transform:scaleX(0.9);transform-origin:0 50%;">369</span>
<span class="t" style="top:504px;font-size:12px;color:#606060;right:601px;transform:scaleX(0.9);transform-origin:100% 50%;">380</span>
<span class="t" style="top:504px;font-size:12px;color:#606060;left:1323px;transform:scaleX(0.9);transform-origin:0 50%;">x</span>
<span class="t" style="top:504px;font-size:12px;color:#606060;left:1331px;transform:scaleX(0.9);transform-origin:0 50%;">299</span>
<span class="t" style="top:517px;font-size:12px;color:#606060;right:601px;transform:scaleX(0.9);transform-origin:100% 50%;">366</span>
<span class="t" style="top:517px;font-size:12px;color:#606060;left:1323px;transform:scaleX(0.9);transform-origin:0 50%;">x</span>
<span class="t" style="top:517px;font-size:12px;color:#606060;left:1331px;transform:scaleX(0.9);transform-origin:0 50%;">275</span>
<span class="t" style="top:529px;font-size:12px;color:#606060;right:601px;transform:scaleX(0.9);transform-origin:100% 50%;">290</span>
<span class="t" style="top:529px;font-size:12px;color:#606060;left:1323px;transform:scaleX(0.9);transform-origin:0 50%;">x</span>
<span class="t" style="top:529px;font-size:12px;color:#606060;left:1331px;transform:scaleX(0.9);transform-origin:0 50%;">217</span>
<span class="t" style="top:268px;font-size:12px;color:#606060;right:503px;transform:scaleX(0.9);transform-origin:100% 50%;">0</span>
<span class="t" style="top:268px;font-size:12px;color:#00ff00;left:1421px;transform:scaleX(0.9);transform-origin:0 50%;">x</span>
<span class="t" style="top:268px;font-size:12px;color:#00ff00;left:1429px;transform:scaleX(0.9);transform-origin:0 50%;">145</span>
<span class="t" style="top:281px;font-size:12px;color:#606060;right:503px;transform:scaleX(0.9);transform-origin:100% 50%;">363</span>
<span class="t" style="top:281px;font-size:12px;color:#606060;left:1421px;transform:scaleX(0.9);transform-origin:0 50%;">x</span>
<span class="t" style="top:281px;font-size:12px;color:#606060;left:1429px;transform:scaleX(0.9);transform-origin:0 50%;">416</span>
<span class="t" style="top:293px;font-size:12px;color:#606060;right:503px;transform:scaleX(0.9);transform-origin:100% 50%;">645</span>
<span class="t" style="top:293px;font-size:12px;color:#606060;left:1421px;transform:scaleX(0.9);transform-origin:0 50%;">x</span>
<span class="t" style="top:293px;font-size:12px;color:#606060;left:1429px;transform:scaleX(0.9);transform-origin:0 50%;">581</span>
<span class="t" style="top:306px;font-size:12px;color:#606060;right:503px;transform:scaleX(0.9);transform-origin:100% 50%;">437</span>
<span class="t" style="top:306px;font-size:12px;color:#606060;left:1421px;transform:scaleX(0.9);transform-origin:0 50%;">x</span>
<span class="t" style="top:306px;font-size:12px;color:#606060;left:1429px;transform:scaleX(0.9);transform-origin:0 50%;">312</span>
<span class="t" style="top:318px;font-size:12px;color:#606060;right:503px;transform:scaleX(0.9);transform-origin:100% 50%;">756</span>
<span class="t" style="top:318px;font-size:12px;color:#606060;left:1421px;transform:scaleX(0.9);transform-origin:0 50%;">x</span>
<span class="t" style="top:318px;font-size:12px;color:#606060;left:1429px;transform:scaleX(0.9);transform-origin:0 50%;">577</span>
<span class="t" style="top:331px;font-size:12px;color:#606060;right:503px;transform:scaleX(0.9);transform-origin:100% 50%;">361</span>
<span class="t" style="top:331px;font-size:12px;color:#606060;left:1421px;transform:scaleX(0.9);transform-origin:0 50%;">x</span>
<span class="t" style="top:331px;font-size:12px;color:#606060;left:1429px;transform:scaleX(0.9);transform-origin:0 50%;">278</span>
<span class="t" style="top:343px;font-size:12px;color:#606060;right:503px;transform:scaleX(0.9);transform-origin:100% 50%;">563</span>
<span class="t" style="top:343px;font-size:12px;color:#606060;left:1421px;transform:scaleX(0.9);transform-origin:0 50%;">x</span>
<span class="t" style="top:343px;font-size:12px;color:#606060;left:1429px;transform:scaleX(0.9);transform-origin:0 50%;">371</span>
<span class="t" style="top:355px;font-size:12px;color:#606060;right:503px;transform:scaleX(0.9);transform-origin:100% 50%;">677</span>
<span class="t" style="top:355px;font-size:12px;color:#606060;left:1421px;transform:scaleX(0.9);transform-origin:0 50%;">x</span>
<span class="t" style="top:355px;font-size:12px;color:#606060;left:1429px;transform:scaleX(0.9);transform-origin:0 50%;">445</span>
<span class="t" style="top:368px;font-size:12px;color:#606060;right:503px;transform:scaleX(0.9);transform-origin:100% 50%;">246</span>
<span class="t" style="top:368px;font-size:12px;color:#606060;left:1421px;transform:scaleX(0.9);transform-origin:0 50%;">x</span>
<span class="t" style="top:368px;font-size:12px;color:#606060;left:1429px;transform:scaleX(0.9);transform-origin:0 50%;">183</span>
<span class="t" style="top:380px;font-size:12px;color:#ff0000;right:503px;transform:scaleX(0.9);transform-origin:100% 50%;">42</span>
<span class="t" style="top:380px;font-size:12px;color:#ff0000;left:1421px;transform:scaleX(0.9);transform-origin:0 50%;">x</span>
<span class="t" style="top:380px;font-size:12px;color:#606060;left:1429px;transform:scaleX(0.9);transform-origin:0 50%;">0</span>
<svg class="b" style="left:1375px;top:356px" width="7" height="14" viewBox="0 0 7 14" shape-rendering="crispEdges"><path d="M0 0h1v1h1v1h1v1h1v1h1v1h1v1h1v2h-1v1h-1v1h-1v1h-1v1h-1v1h-1v1h-1z" fill="#0080ff"/></svg>
<span class="t" style="top:281px;font-size:12px;color:#606060;right:405px;transform:scaleX(0.9);transform-origin:100% 50%;">0</span>
<span class="t" style="top:281px;font-size:12px;color:#00ff00;left:1519px;transform:scaleX(0.9);transform-origin:0 50%;">x</span>
<span class="t" style="top:281px;font-size:12px;color:#00ff00;left:1527px;transform:scaleX(0.9);transform-origin:0 50%;">74</span>
<span class="t" style="top:293px;font-size:12px;color:#606060;right:405px;transform:scaleX(0.9);transform-origin:100% 50%;">147</span>
<span class="t" style="top:293px;font-size:12px;color:#606060;left:1519px;transform:scaleX(0.9);transform-origin:0 50%;">x</span>
<span class="t" style="top:293px;font-size:12px;color:#606060;left:1527px;transform:scaleX(0.9);transform-origin:0 50%;">119</span>
<span class="t" style="top:306px;font-size:12px;color:#ff0000;right:405px;transform:scaleX(0.9);transform-origin:100% 50%;">92</span>
<span class="t" style="top:306px;font-size:12px;color:#ff0000;left:1519px;transform:scaleX(0.9);transform-origin:0 50%;">x</span>
<span class="t" style="top:306px;font-size:12px;color:#606060;left:1527px;transform:scaleX(0.9);transform-origin:0 50%;">23</span>
<span class="t" style="top:318px;font-size:12px;color:#606060;right:405px;transform:scaleX(0.9);transform-origin:100% 50%;">107</span>
<span class="t" style="top:318px;font-size:12px;color:#606060;left:1519px;transform:scaleX(0.9);transform-origin:0 50%;">x</span>
<span class="t" style="top:318px;font-size:12px;color:#606060;left:1527px;transform:scaleX(0.9);transform-origin:0 50%;">173</span>
<span class="t" style="top:331px;font-size:12px;color:#606060;right:405px;transform:scaleX(0.9);transform-origin:100% 50%;">197</span>
<span class="t" style="top:331px;font-size:12px;color:#606060;left:1519px;transform:scaleX(0.9);transform-origin:0 50%;">x</span>
<span class="t" style="top:331px;font-size:12px;color:#606060;left:1527px;transform:scaleX(0.9);transform-origin:0 50%;">111</span>
<span class="t" style="top:343px;font-size:12px;color:#606060;right:405px;transform:scaleX(0.9);transform-origin:100% 50%;">232</span>
<span class="t" style="top:343px;font-size:12px;color:#606060;left:1519px;transform:scaleX(0.9);transform-origin:0 50%;">x</span>
<span class="t" style="top:343px;font-size:12px;color:#606060;left:1527px;transform:scaleX(0.9);transform-origin:0 50%;">99</span>
<span class="t" style="top:355px;font-size:12px;color:#606060;right:405px;transform:scaleX(0.9);transform-origin:100% 50%;">331</span>
<span class="t" style="top:355px;font-size:12px;color:#606060;left:1519px;transform:scaleX(0.9);transform-origin:0 50%;">x</span>
<span class="t" style="top:355px;font-size:12px;color:#606060;left:1527px;transform:scaleX(0.9);transform-origin:0 50%;">196</span>
<span class="t" style="top:368px;font-size:12px;color:#606060;right:405px;transform:scaleX(0.9);transform-origin:100% 50%;">639</span>
<span class="t" style="top:368px;font-size:12px;color:#606060;left:1519px;transform:scaleX(0.9);transform-origin:0 50%;">x</span>
<span class="t" style="top:368px;font-size:12px;color:#606060;left:1527px;transform:scaleX(0.9);transform-origin:0 50%;">410</span>
<span class="t" style="top:380px;font-size:12px;color:#606060;right:405px;transform:scaleX(0.9);transform-origin:100% 50%;">429</span>
<span class="t" style="top:380px;font-size:12px;color:#606060;left:1519px;transform:scaleX(0.9);transform-origin:0 50%;">x</span>
<span class="t" style="top:380px;font-size:12px;color:#606060;left:1527px;transform:scaleX(0.9);transform-origin:0 50%;">326</span>
<span class="t" style="top:393px;font-size:12px;color:#606060;right:405px;transform:scaleX(0.9);transform-origin:100% 50%;">552</span>
<span class="t" style="top:393px;font-size:12px;color:#606060;left:1519px;transform:scaleX(0.9);transform-origin:0 50%;">x</span>
<span class="t" style="top:393px;font-size:12px;color:#606060;left:1527px;transform:scaleX(0.9);transform-origin:0 50%;">394</span>
<span class="t" style="top:405px;font-size:12px;color:#606060;right:405px;transform:scaleX(0.9);transform-origin:100% 50%;">507</span>
<span class="t" style="top:405px;font-size:12px;color:#606060;left:1519px;transform:scaleX(0.9);transform-origin:0 50%;">x</span>
<span class="t" style="top:405px;font-size:12px;color:#606060;left:1527px;transform:scaleX(0.9);transform-origin:0 50%;">272</span>
<span class="t" style="top:417px;font-size:12px;color:#ff0000;right:405px;transform:scaleX(0.9);transform-origin:100% 50%;">236</span>
<span class="t" style="top:417px;font-size:12px;color:#ff0000;left:1519px;transform:scaleX(0.9);transform-origin:0 50%;">x</span>
<span class="t" style="top:417px;font-size:12px;color:#606060;left:1527px;transform:scaleX(0.9);transform-origin:0 50%;">54</span>
<span class="t" style="top:430px;font-size:12px;color:#606060;right:405px;transform:scaleX(0.9);transform-origin:100% 50%;">145</span>
<span class="t" style="top:430px;font-size:12px;color:#606060;left:1519px;transform:scaleX(0.9);transform-origin:0 50%;">x</span>
<span class="t" style="top:430px;font-size:12px;color:#606060;left:1527px;transform:scaleX(0.9);transform-origin:0 50%;">154</span>
<span class="t" style="top:442px;font-size:12px;color:#606060;right:405px;transform:scaleX(0.9);transform-origin:100% 50%;">345</span>
<span class="t" style="top:442px;font-size:12px;color:#606060;left:1519px;transform:scaleX(0.9);transform-origin:0 50%;">x</span>
<span class="t" style="top:442px;font-size:12px;color:#606060;left:1527px;transform:scaleX(0.9);transform-origin:0 50%;">201</span>
<span class="t" style="top:455px;font-size:12px;color:#606060;right:405px;transform:scaleX(0.9);transform-origin:100% 50%;">123</span>
<span class="t" style="top:455px;font-size:12px;color:#606060;left:1519px;transform:scaleX(0.9);transform-origin:0 50%;">x</span>
<span class="t" style="top:455px;font-size:12px;color:#606060;left:1527px;transform:scaleX(0.9);transform-origin:0 50%;">53</span>
<span class="t" style="top:467px;font-size:12px;color:#606060;right:405px;transform:scaleX(0.9);transform-origin:100% 50%;">194</span>
<span class="t" style="top:467px;font-size:12px;color:#606060;left:1519px;transform:scaleX(0.9);transform-origin:0 50%;">x</span>
<span class="t" style="top:467px;font-size:12px;color:#606060;left:1527px;transform:scaleX(0.9);transform-origin:0 50%;">111</span>
<span class="t" style="top:479px;font-size:12px;color:#606060;right:405px;transform:scaleX(0.9);transform-origin:100% 50%;">185</span>
<span class="t" style="top:479px;font-size:12px;color:#606060;left:1519px;transform:scaleX(0.9);transform-origin:0 50%;">x</span>
<span class="t" style="top:479px;font-size:12px;color:#606060;left:1527px;transform:scaleX(0.9);transform-origin:0 50%;">126</span>
<span class="t" style="top:492px;font-size:12px;color:#606060;right:405px;transform:scaleX(0.9);transform-origin:100% 50%;">149</span>
<span class="t" style="top:492px;font-size:12px;color:#606060;left:1519px;transform:scaleX(0.9);transform-origin:0 50%;">x</span>
<span class="t" style="top:492px;font-size:12px;color:#606060;left:1527px;transform:scaleX(0.9);transform-origin:0 50%;">131</span>
<span class="t" style="top:504px;font-size:12px;color:#ff0000;right:405px;transform:scaleX(0.9);transform-origin:100% 50%;">74</span>
<span class="t" style="top:504px;font-size:12px;color:#ff0000;left:1519px;transform:scaleX(0.9);transform-origin:0 50%;">x</span>
<span class="t" style="top:504px;font-size:12px;color:#606060;left:1527px;transform:scaleX(0.9);transform-origin:0 50%;">9</span>
<span class="t" style="top:517px;font-size:12px;color:#ff0000;right:405px;transform:scaleX(0.9);transform-origin:100% 50%;">18</span>
<span class="t" style="top:517px;font-size:12px;color:#ff0000;left:1519px;transform:scaleX(0.9);transform-origin:0 50%;">x</span>
<span class="t" style="top:517px;font-size:12px;color:#606060;left:1527px;transform:scaleX(0.9);transform-origin:0 50%;">0</span>
<svg class="b" style="left:1473px;top:344px" width="7" height="14" viewBox="0 0 7 14" shape-rendering="crispEdges"><path d="M0 0h1v1h1v1h1v1h1v1h1v1h1v1h1v2h-1v1h-1v1h-1v1h-1v1h-1v1h-1v1h-1z" fill="#0080ff"/></svg>
<span class="t" style="top:467px;font-size:12px;color:#606060;right:307px;transform:scaleX(0.9);transform-origin:100% 50%;">0</span>
<span class="t" style="top:467px;font-size:12px;color:#00ff00;left:1617px;transform:scaleX(0.9);transform-origin:0 50%;">x</span>
<span class="t" style="top:467px;font-size:12px;color:#00ff00;left:1625px;transform:scaleX(0.9);transform-origin:0 50%;">8</span>
<span class="t" style="top:479px;font-size:12px;color:#606060;right:307px;transform:scaleX(0.9);transform-origin:100% 50%;">171</span>
<span class="t" style="top:479px;font-size:12px;color:#606060;left:1617px;transform:scaleX(0.9);transform-origin:0 50%;">x</span>
<span class="t" style="top:479px;font-size:12px;color:#606060;left:1625px;transform:scaleX(0.9);transform-origin:0 50%;">262</span>
<span class="t" style="top:492px;font-size:12px;color:#606060;right:307px;transform:scaleX(0.9);transform-origin:100% 50%;">425</span>
<span class="t" style="top:492px;font-size:12px;color:#606060;left:1617px;transform:scaleX(0.9);transform-origin:0 50%;">x</span>
<span class="t" style="top:492px;font-size:12px;color:#606060;left:1625px;transform:scaleX(0.9);transform-origin:0 50%;">489</span>
<span class="t" style="top:504px;font-size:12px;color:#606060;right:307px;transform:scaleX(0.9);transform-origin:100% 50%;">405</span>
<span class="t" style="top:504px;font-size:12px;color:#606060;left:1617px;transform:scaleX(0.9);transform-origin:0 50%;">x</span>
<span class="t" style="top:504px;font-size:12px;color:#606060;left:1625px;transform:scaleX(0.9);transform-origin:0 50%;">503</span>
<span class="t" style="top:517px;font-size:12px;color:#606060;right:307px;transform:scaleX(0.9);transform-origin:100% 50%;">634</span>
<span class="t" style="top:517px;font-size:12px;color:#606060;left:1617px;transform:scaleX(0.9);transform-origin:0 50%;">x</span>
<span class="t" style="top:517px;font-size:12px;color:#606060;left:1625px;transform:scaleX(0.9);transform-origin:0 50%;">470</span>
<span class="t" style="top:529px;font-size:12px;color:#606060;right:307px;transform:scaleX(0.9);transform-origin:100% 50%;">536</span>
<span class="t" style="top:529px;font-size:12px;color:#606060;left:1617px;transform:scaleX(0.9);transform-origin:0 50%;">x</span>
<span class="t" style="top:529px;font-size:12px;color:#606060;left:1625px;transform:scaleX(0.9);transform-origin:0 50%;">263</span>
<span class="t" style="top:541px;font-size:12px;color:#606060;right:307px;transform:scaleX(0.9);transform-origin:100% 50%;">159</span>
<span class="t" style="top:541px;font-size:12px;color:#606060;left:1617px;transform:scaleX(0.9);transform-origin:0 50%;">x</span>
<span class="t" style="top:541px;font-size:12px;color:#606060;left:1625px;transform:scaleX(0.9);transform-origin:0 50%;">94</span>
<span class="t" style="top:554px;font-size:12px;color:#606060;right:307px;transform:scaleX(0.9);transform-origin:100% 50%;">177</span>
<span class="t" style="top:554px;font-size:12px;color:#606060;left:1617px;transform:scaleX(0.9);transform-origin:0 50%;">x</span>
<span class="t" style="top:554px;font-size:12px;color:#606060;left:1625px;transform:scaleX(0.9);transform-origin:0 50%;">60</span>
<span class="t" style="top:566px;font-size:12px;color:#606060;right:307px;transform:scaleX(0.9);transform-origin:100% 50%;">313</span>
<span class="t" style="top:566px;font-size:12px;color:#606060;left:1617px;transform:scaleX(0.9);transform-origin:0 50%;">x</span>
<span class="t" style="top:566px;font-size:12px;color:#606060;left:1625px;transform:scaleX(0.9);transform-origin:0 50%;">261</span>
<span class="t" style="top:579px;font-size:12px;color:#606060;right:307px;transform:scaleX(0.9);transform-origin:100% 50%;">503</span>
<span class="t" style="top:579px;font-size:12px;color:#606060;left:1617px;transform:scaleX(0.9);transform-origin:0 50%;">x</span>
<span class="t" style="top:579px;font-size:12px;color:#606060;left:1625px;transform:scaleX(0.9);transform-origin:0 50%;">212</span>
<span class="t" style="top:591px;font-size:12px;color:#ff0000;right:307px;transform:scaleX(0.9);transform-origin:100% 50%;">140</span>
<span class="t" style="top:591px;font-size:12px;color:#ff0000;left:1617px;transform:scaleX(0.9);transform-origin:0 50%;">x</span>
<span class="t" style="top:591px;font-size:12px;color:#606060;left:1625px;transform:scaleX(0.9);transform-origin:0 50%;">6</span>
<span class="t" style="top:603px;font-size:12px;color:#606060;right:307px;transform:scaleX(0.9);transform-origin:100% 50%;">118</span>
<span class="t" style="top:603px;font-size:12px;color:#606060;left:1617px;transform:scaleX(0.9);transform-origin:0 50%;">x</span>
<span class="t" style="top:603px;font-size:12px;color:#606060;left:1625px;transform:scaleX(0.9);transform-origin:0 50%;">41</span>
<span class="t" style="top:616px;font-size:12px;color:#606060;right:307px;transform:scaleX(0.9);transform-origin:100% 50%;">197</span>
<span class="t" style="top:616px;font-size:12px;color:#606060;left:1617px;transform:scaleX(0.9);transform-origin:0 50%;">x</span>
<span class="t" style="top:616px;font-size:12px;color:#606060;left:1625px;transform:scaleX(0.9);transform-origin:0 50%;">116</span>
<span class="t" style="top:628px;font-size:12px;color:#606060;right:307px;transform:scaleX(0.9);transform-origin:100% 50%;">217</span>
<span class="t" style="top:628px;font-size:12px;color:#606060;left:1617px;transform:scaleX(0.9);transform-origin:0 50%;">x</span>
<span class="t" style="top:628px;font-size:12px;color:#606060;left:1625px;transform:scaleX(0.9);transform-origin:0 50%;">115</span>
<span class="t" style="top:641px;font-size:12px;color:#ff0000;right:307px;transform:scaleX(0.9);transform-origin:100% 50%;">63</span>
<span class="t" style="top:641px;font-size:12px;color:#ff0000;left:1617px;transform:scaleX(0.9);transform-origin:0 50%;">x</span>
<span class="t" style="top:641px;font-size:12px;color:#606060;left:1625px;transform:scaleX(0.9);transform-origin:0 50%;">0</span>
<svg class="b" style="left:1571px;top:518px" width="7" height="14" viewBox="0 0 7 14" shape-rendering="crispEdges"><path d="M0 0h1v1h1v1h1v1h1v1h1v1h1v1h1v2h-1v1h-1v1h-1v1h-1v1h-1v1h-1v1h-1z" fill="#0080ff"/></svg>
<span class="t" style="top:529px;font-size:12px;color:#606060;right:209px;transform:scaleX(0.9);transform-origin:100% 50%;">0</span>
<span class="t" style="top:529px;font-size:12px;color:#00ff00;left:1715px;transform:scaleX(0.9);transform-origin:0 50%;">x</span>
<span class="t" style="top:529px;font-size:12px;color:#00ff00;left:1723px;transform:scaleX(0.9);transform-origin:0 50%;">83</span>
<span class="t" style="top:541px;font-size:12px;color:#606060;right:209px;transform:scaleX(0.9);transform-origin:100% 50%;">250</span>
<span class="t" style="top:541px;font-size:12px;color:#606060;left:1715px;transform:scaleX(0.9);transform-origin:0 50%;">x</span>
<span class="t" style="top:541px;font-size:12px;color:#606060;left:1723px;transform:scaleX(0.9);transform-origin:0 50%;">468</span>
<span class="t" style="top:554px;font-size:12px;color:#606060;right:209px;transform:scaleX(0.9);transform-origin:100% 50%;">669</span>
<span class="t" style="top:554px;font-size:12px;color:#606060;left:1715px;transform:scaleX(0.9);transform-origin:0 50%;">x</span>
<span class="t" style="top:554px;font-size:12px;color:#606060;left:1723px;transform:scaleX(0.9);transform-origin:0 50%;">832</span>
<span class="t" style="top:566px;font-size:12px;color:#606060;right:209px;transform:scaleX(0.9);transform-origin:100% 50%;">773</span>
<span class="t" style="top:566px;font-size:12px;color:#606060;left:1715px;transform:scaleX(0.9);transform-origin:0 50%;">x</span>
<span class="t" style="top:566px;font-size:12px;color:#606060;left:1723px;transform:scaleX(0.9);transform-origin:0 50%;">714</span>
<span class="t" style="top:579px;font-size:12px;color:#606060;right:209px;transform:scaleX(0.9);transform-origin:100% 50%;">458</span>
<span class="t" style="top:579px;font-size:12px;color:#606060;left:1715px;transform:scaleX(0.9);transform-origin:0 50%;">x</span>
<span class="t" style="top:579px;font-size:12px;color:#606060;left:1723px;transform:scaleX(0.9);transform-origin:0 50%;">328</span>
<span class="t" style="top:591px;font-size:12px;color:#606060;right:209px;transform:scaleX(0.9);transform-origin:100% 50%;">226</span>
<span class="t" style="top:591px;font-size:12px;color:#606060;left:1715px;transform:scaleX(0.9);transform-origin:0 50%;">x</span>
<span class="t" style="top:591px;font-size:12px;color:#606060;left:1723px;transform:scaleX(0.9);transform-origin:0 50%;">238</span>
<span class="t" style="top:603px;font-size:12px;color:#606060;right:209px;transform:scaleX(0.9);transform-origin:100% 50%;">110</span>
<span class="t" style="top:603px;font-size:12px;color:#606060;left:1715px;transform:scaleX(0.9);transform-origin:0 50%;">x</span>
<span class="t" style="top:603px;font-size:12px;color:#606060;left:1723px;transform:scaleX(0.9);transform-origin:0 50%;">84</span>
<span class="t" style="top:616px;font-size:12px;color:#606060;right:209px;transform:scaleX(0.9);transform-origin:100% 50%;">12</span>
<span class="t" style="top:616px;font-size:12px;color:#00ff00;left:1715px;transform:scaleX(0.9);transform-origin:0 50%;">x</span>
<span class="t" style="top:616px;font-size:12px;color:#00ff00;left:1723px;transform:scaleX(0.9);transform-origin:0 50%;">98</span>
<span class="t" style="top:628px;font-size:12px;color:#606060;right:209px;transform:scaleX(0.9);transform-origin:100% 50%;">42</span>
<span class="t" style="top:628px;font-size:12px;color:#606060;left:1715px;transform:scaleX(0.9);transform-origin:0 50%;">x</span>
<span class="t" style="top:628px;font-size:12px;color:#606060;left:1723px;transform:scaleX(0.9);transform-origin:0 50%;">129</span>
<span class="t" style="top:641px;font-size:12px;color:#606060;right:209px;transform:scaleX(0.9);transform-origin:100% 50%;">272</span>
<span class="t" style="top:641px;font-size:12px;color:#606060;left:1715px;transform:scaleX(0.9);transform-origin:0 50%;">x</span>
<span class="t" style="top:641px;font-size:12px;color:#606060;left:1723px;transform:scaleX(0.9);transform-origin:0 50%;">322</span>
<span class="t" style="top:653px;font-size:12px;color:#606060;right:209px;transform:scaleX(0.9);transform-origin:100% 50%;">192</span>
<span class="t" style="top:653px;font-size:12px;color:#606060;left:1715px;transform:scaleX(0.9);transform-origin:0 50%;">x</span>
<span class="t" style="top:653px;font-size:12px;color:#606060;left:1723px;transform:scaleX(0.9);transform-origin:0 50%;">224</span>
<span class="t" style="top:665px;font-size:12px;color:#606060;right:209px;transform:scaleX(0.9);transform-origin:100% 50%;">251</span>
<span class="t" style="top:665px;font-size:12px;color:#606060;left:1715px;transform:scaleX(0.9);transform-origin:0 50%;">x</span>
<span class="t" style="top:665px;font-size:12px;color:#606060;left:1723px;transform:scaleX(0.9);transform-origin:0 50%;">176</span>
<span class="t" style="top:678px;font-size:12px;color:#606060;right:209px;transform:scaleX(0.9);transform-origin:100% 50%;">182</span>
<span class="t" style="top:678px;font-size:12px;color:#606060;left:1715px;transform:scaleX(0.9);transform-origin:0 50%;">x</span>
<span class="t" style="top:678px;font-size:12px;color:#606060;left:1723px;transform:scaleX(0.9);transform-origin:0 50%;">130</span>
<span class="t" style="top:690px;font-size:12px;color:#606060;right:209px;transform:scaleX(0.9);transform-origin:100% 50%;">112</span>
<span class="t" style="top:690px;font-size:12px;color:#606060;left:1715px;transform:scaleX(0.9);transform-origin:0 50%;">x</span>
<span class="t" style="top:690px;font-size:12px;color:#606060;left:1723px;transform:scaleX(0.9);transform-origin:0 50%;">71</span>
<span class="t" style="top:703px;font-size:12px;color:#606060;right:209px;transform:scaleX(0.9);transform-origin:100% 50%;">216</span>
<span class="t" style="top:703px;font-size:12px;color:#606060;left:1715px;transform:scaleX(0.9);transform-origin:0 50%;">x</span>
<span class="t" style="top:703px;font-size:12px;color:#606060;left:1723px;transform:scaleX(0.9);transform-origin:0 50%;">140</span>
<span class="t" style="top:715px;font-size:12px;color:#ff0000;right:209px;transform:scaleX(0.9);transform-origin:100% 50%;">28</span>
<span class="t" style="top:715px;font-size:12px;color:#ff0000;left:1715px;transform:scaleX(0.9);transform-origin:0 50%;">x</span>
<span class="t" style="top:715px;font-size:12px;color:#606060;left:1723px;transform:scaleX(0.9);transform-origin:0 50%;">0</span>
<svg class="b" style="left:1669px;top:629px" width="7" height="14" viewBox="0 0 7 14" shape-rendering="crispEdges"><path d="M0 0h1v1h1v1h1v1h1v1h1v1h1v1h1v2h-1v1h-1v1h-1v1h-1v1h-1v1h-1v1h-1z" fill="#0080ff"/></svg>
<div class="b" style="left:1774px;top:375px;width:73px;height:2px;background:#ff0000;"></div>
<span class="t" style="top:368px;font-size:12px;color:#fff;right:51px;transform:scaleX(0.9);transform-origin:100% 50%;">203</span>
<div class="b" style="left:1809px;top:387px;width:38px;height:2px;background:#ff0000;"></div>
<span class="t" style="top:380px;font-size:12px;color:#fff;right:51px;transform:scaleX(0.9);transform-origin:100% 50%;">105</span>
<div class="b" style="left:1802px;top:400px;width:45px;height:2px;background:#ff0000;"></div>
<span class="t" style="top:393px;font-size:12px;color:#fff;right:51px;transform:scaleX(0.9);transform-origin:100% 50%;">126</span>
<div class="b" style="left:1800px;top:412px;width:47px;height:2px;background:#ff0000;"></div>
<span class="t" style="top:405px;font-size:12px;color:#fff;right:51px;transform:scaleX(0.9);transform-origin:100% 50%;">131</span>
<div class="b" style="left:1746px;top:424px;width:101px;height:2px;background:#ff0000;"></div>
<span class="t" style="top:417px;font-size:12px;color:#fff;right:51px;transform:scaleX(0.9);transform-origin:100% 50%;">281</span>
<div class="b" style="left:1794px;top:437px;width:53px;height:2px;background:#ff0000;"></div>
<span class="t" style="top:430px;font-size:12px;color:#fff;right:51px;transform:scaleX(0.9);transform-origin:100% 50%;">149</span>
<div class="b" style="left:1803px;top:449px;width:44px;height:2px;background:#ff0000;"></div>
<span class="t" style="top:442px;font-size:12px;color:#fff;right:51px;transform:scaleX(0.9);transform-origin:100% 50%;">122</span>
<div class="b" style="left:1823px;top:462px;width:24px;height:2px;background:#ff0000;"></div>
<span class="t" style="top:455px;font-size:12px;color:#fff;right:51px;transform:scaleX(0.9);transform-origin:100% 50%;">66</span>
<div class="b" style="left:1791px;top:474px;width:56px;height:2px;background:#ff0000;"></div>
<span class="t" style="top:467px;font-size:12px;color:#fff;right:51px;transform:scaleX(0.9);transform-origin:100% 50%;">156</span>
<div class="b" style="left:1812px;top:486px;width:35px;height:2px;background:#ff0000;"></div>
<span class="t" style="top:479px;font-size:12px;color:#fff;right:51px;transform:scaleX(0.9);transform-origin:100% 50%;">97</span>
<div class="b" style="left:1824px;top:499px;width:23px;height:2px;background:#00ff00;"></div>
<span class="t" style="top:492px;font-size:12px;color:#fff;right:51px;transform:scaleX(0.9);transform-origin:100% 50%;">65</span>
<div class="b" style="left:1826px;top:511px;width:21px;height:2px;background:#00ff00;"></div>
<span class="t" style="top:504px;font-size:12px;color:#fff;right:51px;transform:scaleX(0.9);transform-origin:100% 50%;">58</span>
<div class="b" style="left:1808px;top:524px;width:39px;height:2px;background:#00ff00;"></div>
<span class="t" style="top:517px;font-size:12px;color:#fff;right:51px;transform:scaleX(0.9);transform-origin:100% 50%;">109</span>
<div class="b" style="left:1818px;top:536px;width:29px;height:2px;background:#00ff00;"></div>
<span class="t" style="top:529px;font-size:12px;color:#fff;right:51px;transform:scaleX(0.9);transform-origin:100% 50%;">80</span>
<div class="b" style="left:1823px;top:548px;width:24px;height:2px;background:#00ff00;"></div>
<span class="t" style="top:541px;font-size:12px;color:#fff;right:51px;transform:scaleX(0.9);transform-origin:100% 50%;">66</span>
<div class="b" style="left:1828px;top:561px;width:19px;height:2px;background:#00ff00;"></div>
<span class="t" style="top:554px;font-size:12px;color:#fff;right:51px;transform:scaleX(0.9);transform-origin:100% 50%;">53</span>
<div class="b" style="left:1816px;top:573px;width:31px;height:2px;background:#00ff00;"></div>
<span class="t" style="top:566px;font-size:12px;color:#fff;right:51px;transform:scaleX(0.9);transform-origin:100% 50%;">86</span>
<div class="b" style="left:1819px;top:586px;width:28px;height:2px;background:#00ff00;"></div>
<span class="t" style="top:579px;font-size:12px;color:#fff;right:51px;transform:scaleX(0.9);transform-origin:100% 50%;">79</span>
<div class="b" style="left:1826px;top:598px;width:21px;height:2px;background:#00ff00;"></div>
<span class="t" style="top:591px;font-size:12px;color:#fff;right:51px;transform:scaleX(0.9);transform-origin:100% 50%;">60</span>
<div class="b" style="left:1822px;top:610px;width:25px;height:2px;background:#00ff00;"></div>
<span class="t" style="top:603px;font-size:12px;color:#fff;right:51px;transform:scaleX(0.9);transform-origin:100% 50%;">71</span>
<div class="b" style="left:7px;top:1012px;width:146px;height:27px;background:#fff;border-left:1px solid #9a9a9a;border-right:1px solid #9a9a9a;box-sizing:border-box"></div>
<svg class="b" style="left:16px;top:1018px" width="15" height="13" viewBox="0 0 15 13"><rect x="0.500" y="0.500" width="14" height="12" fill="#e8e8e8" stroke="#b4bcc8"/><rect x="2" y="2.500" width="5" height="9" fill="#3f9a8a"/><rect x="2" y="2.500" width="5" height="4" fill="#4a8ac0" opacity="0.700"/><rect x="8" y="2.500" width="3" height="9" fill="#dcdcdc"/><rect x="11.500" y="2.500" width="2" height="4" fill="#7fb2e0"/></svg>
<svg class="b" style="left:33px;top:1019px" width="11" height="12" viewBox="0 0 11 12" shape-rendering="crispEdges"><path d="M2.500 3.500V1.500H9.500V8.500H7.500" fill="none" stroke="#6e6e6e"/><rect x="0.500" y="3.500" width="7" height="7" fill="none" stroke="#6e6e6e"/></svg>
<svg class="b" style="left:78px;top:1020px" width="10" height="10" viewBox="0 0 10 10" shape-rendering="crispEdges"><rect x="0.500" y="0.500" width="9" height="9" fill="none" stroke="#d8d8d8"/></svg>
<svg class="b" style="left:123px;top:1019px" width="12" height="12" viewBox="-6 -6 12 12"><path d="M-5 -5L5 5M5 -5L-5 5" stroke="#6e6e6e" stroke-width="1" fill="none"/></svg>
<div class="b" style="left:575px;top:29px;width:558px;height:228px;background:#fff;border:1px solid rgba(0,0,0,0.37);box-sizing:border-box;background-clip:padding-box"></div>
<div class="b" style="left:577px;top:60px;width:554px;height:195px;background:#f0f0f0;"></div>
<span class="t" style="top:37px;font-size:12px;color:#999;left:584px;transform:scaleX(0.917);transform-origin:0 50%;">Paused 1.00X: ES.20200600.CME_Eq [CBV]  1 Min   #29</span>
<svg class="b" style="left:1111px;top:38px" width="12" height="12" viewBox="-6 -6 12 12"><path d="M-5 -5L5 5M5 -5L-5 5" stroke="#666" stroke-width="1" fill="none"/></svg>
<span class="t" style="top:69px;font-size:13.8px;color:#000;left:584px;transform:scaleX(0.952);transform-origin:0 50%;">Charts to Replay:</span>
<span class="t" style="top:69px;font-size:13.8px;color:#000;left:854.5px;transform:scaleX(0.9924);transform-origin:0 50%;">Replay Mode:</span>
<div class="b sk" style="left:584px;top:86px;width:262px;height:24px;"><div style="background:#fff"></div></div>
<div class="b" style="left:588px;top:91px;width:239px;height:16px;overflow:hidden"><span class="t" style="left:0;top:0;font-size:13.8px;transform:scaleX(0.9547);transform-origin:0 50%;">Single Chart</span></div>
<div class="b rs" style="left:827px;top:88px;width:17px;height:20px;"><div></div></div>
<svg class="b" style="left:832.0px;top:96px" width="7" height="4" viewBox="0 0 7 4" shape-rendering="crispEdges"><path d="M0 0h7v1h-1v1h-1v1h-1v1h-1v-1h-1v-1h-1v-1h-1z" fill="#000"/></svg>
<div class="b sk" style="left:854px;top:86px;width:262px;height:24px;"><div style="background:#fff"></div></div>
<div class="b" style="left:858.3px;top:91px;width:238.70000000000005px;height:16px;overflow:hidden"><span class="t" style="left:0;top:0;font-size:13.8px;transform:scaleX(0.9649);transform-origin:0 50%;">Calculate At Every Tick/Trade (High CPU</span></div>
<div class="b rs" style="left:1097px;top:88px;width:17px;height:20px;"><div></div></div>
<svg class="b" style="left:1102.0px;top:96px" width="7" height="4" viewBox="0 0 7 4" shape-rendering="crispEdges"><path d="M0 0h7v1h-1v1h-1v1h-1v1h-1v-1h-1v-1h-1v-1h-1z" fill="#000"/></svg>
<span class="t" style="top:119px;font-size:13.8px;color:#fff;left:595px;transform:scaleX(0.966);transform-origin:0 50%;">Use Start Date-Time</span>
<span class="t" style="top:118px;font-size:13.8px;color:#a0a0a0;left:594px;transform:scaleX(0.966);transform-origin:0 50%;">Use Start Date-Time</span>
<div class="b sk" style="left:721px;top:119px;width:13px;height:13px;"><div style="background:#f0f0f0"></div></div>
<span class="t" style="top:117px;font-size:13.8px;color:#000;left:759.3px;transform:scaleX(0.9624);transform-origin:0 50%;">Date (YYYY/MM/DD):</span>
<div class="b sk" style="left:890px;top:114px;width:80px;height:24px;"><div style="background:#f0f0f0"></div></div>
<span class="t" style="top:117px;font-size:13.8px;color:#000;left:1001px;transform:scaleX(0.9415);transform-origin:0 50%;">Time:</span>
<div class="b sk" style="left:1036px;top:114px;width:80px;height:24px;"><div style="background:#f0f0f0"></div></div>
<span class="t" style="top:118px;font-size:13.8px;color:#6d6d6d;left:1038.8px;transform:scaleX(0.8898);transform-origin:0 50%;">00:00:00</span>
<div class="b" style="left:585px;top:151px;width:307px;height:97px;border:1px solid #fff;box-sizing:border-box"></div>
<div class="b" style="left:584px;top:150px;width:307px;height:97px;border:1px solid #a0a0a0;box-sizing:border-box"></div>
<div class="b" style="left:591px;top:150px;width:41px;height:2px;background:#f0f0f0;"></div>
<span class="t" style="top:143px;font-size:13.8px;color:#000;left:594px;transform:scaleX(0.942);transform-origin:0 50%;">Jump:</span>
<span class="t" style="top:159px;font-size:13.8px;color:#000;left:592.4px;transform:scaleX(0.9506);transform-origin:0 50%;">Method:</span>
<div class="b sk" style="left:592px;top:178px;width:176px;height:64px;"><div style="background:#fff"></div></div>
<div class="b" style="left:594px;top:180px;width:172px;height:16px;background:#0078d7;"></div>
<span class="t" style="top:181px;font-size:13.8px;color:#fff;left:597px;transform:scaleX(0.9509);transform-origin:0 50%;">By Time (hh:mm:ss.ms)</span>
<span class="t" style="top:197px;font-size:13.8px;color:#000;left:597px;transform:scaleX(0.974);transform-origin:0 50%;">By Number of Trades</span>
<span class="t" style="top:213px;font-size:13.8px;color:#000;left:597px;transform:scaleX(0.9807);transform-origin:0 50%;">To Next Bar</span>
<span class="t" style="top:161px;font-size:13.8px;color:#000;left:778px;transform:scaleX(0.9057);transform-origin:0 50%;">Unit:</span>
<div class="b sk" style="left:774px;top:180px;width:106px;height:28px;"><div style="background:#fff"></div></div>
<span class="t" style="top:184px;font-size:13.8px;color:#000;left:777.4px;transform:scaleX(0.8861);transform-origin:0 50%;">00:00:00.000</span>
<div class="b rs" style="left:774px;top:212px;width:30px;height:28px;"><div></div></div>
<span class="t" style="top:218px;font-size:13.8px;color:#000;left:639.2px;width:300px;text-align:center;transform:scaleX(0.8562);transform-origin:50% 50%;">&lt;&lt;</span>
<div class="b rs" style="left:848px;top:212px;width:30px;height:28px;"><div></div></div>
<span class="t" style="top:218px;font-size:13.8px;color:#000;left:713px;width:300px;text-align:center;transform:scaleX(0.8624);transform-origin:50% 50%;">&gt;&gt;</span>
<div class="b" style="left:905px;top:151px;width:149px;height:53px;border:1px solid #fff;box-sizing:border-box"></div>
<div class="b" style="left:904px;top:150px;width:149px;height:53px;border:1px solid #a0a0a0;box-sizing:border-box"></div>
<div class="b" style="left:910px;top:150px;width:49px;height:2px;background:#f0f0f0;"></div>
<span class="t" style="top:143px;font-size:13.8px;color:#000;left:913px;transform:scaleX(1.0014);transform-origin:0 50%;">Speed:</span>
<div class="b sk" style="left:912px;top:166px;width:102px;height:24px;"><div style="background:#fff"></div></div>
<div class="b" style="left:915.3px;top:170px;width:79.70000000000005px;height:16px;overflow:hidden"><span class="t" style="left:0;top:0;font-size:13.8px;transform:scaleX(0.8861);transform-origin:0 50%;">1.0</span></div>
<div class="b rs" style="left:995px;top:168px;width:17px;height:20px;"><div></div></div>
<svg class="b" style="left:1000.0px;top:176px" width="7" height="4" viewBox="0 0 7 4" shape-rendering="crispEdges"><path d="M0 0h7v1h-1v1h-1v1h-1v1h-1v-1h-1v-1h-1v-1h-1z" fill="#000"/></svg>
<div class="b rs" style="left:1014px;top:166px;width:16px;height:12px;"><div></div></div>
<div class="b rs" style="left:1014px;top:178px;width:16px;height:12px;"><div></div></div>
<svg class="b" style="left:1019px;top:170px" width="5" height="3" viewBox="0 0 5 3" shape-rendering="crispEdges"><path d="M2 0h1v1h1v1h1v1h-5v-1h1v-1h1z" fill="#000"/></svg>
<svg class="b" style="left:1019px;top:182px" width="5" height="3" viewBox="0 0 5 3" shape-rendering="crispEdges"><path d="M0 0h5v1h-1v1h-1v1h-1v-1h-1v-1h-1z" fill="#000"/></svg>
<div class="b rs" style="left:1062px;top:154px;width:60px;height:28px;"><div></div></div>
<span class="t" style="top:160px;font-size:13.8px;color:#000;left:941.5px;width:300px;text-align:center;transform:scaleX(0.9871);transform-origin:50% 50%;">Play</span>
<div class="b rs" style="left:1062px;top:200px;width:60px;height:28px;"><div></div></div>
<span class="t" style="top:206px;font-size:13.8px;color:#000;left:941.7px;width:300px;text-align:center;transform:scaleX(0.9652);transform-origin:50% 50%;">Stop</span>
<div class="b sk" style="left:906px;top:217px;width:13px;height:13px;"><div style="background:#fff"></div><svg width="7" height="7" viewBox="0 0 7 7" shape-rendering="crispEdges" style="position:absolute;left:2px;top:2px"><path d="M0 2h1v1h1v1h1v-1h1v-1h1v-1h1v-1h1v3h-1v1h-1v1h-1v1h-1v1h-1v-1h-1v-1h-1z" fill="#000"/></svg></div>
<span class="t" style="top:216px;font-size:13.8px;color:#000;left:924px;transform:scaleX(0.9758);transform-origin:0 50%;">Skip Empty Periods</span>
<div class="b" style="left:575px;top:261px;width:770px;height:510px;background:#fffdf8;border:1px solid #0078d7;box-sizing:border-box"></div>
<div class="b" style="left:576px;top:262px;width:768px;height:30px;background:#fff;"></div>
<div class="b" style="left:577px;top:292px;width:766px;height:477px;background:#f0f0f0;"></div>
<span class="t" style="top:269px;font-size:12px;color:#000;left:584px;transform:scaleX(0.9386);transform-origin:0 50%;">Chart Settings - Paused 1.00X: ES.20200600.CME_Eq [CBV]  1 Min   #29 - E-mini S&amp;P 500</span>
<svg class="b" style="left:1323px;top:270px" width="12" height="12" viewBox="-6 -6 12 12"><path d="M-5 -5L5 5M5 -5L-5 5" stroke="#000" stroke-width="1" fill="none"/></svg>
<div class="b" style="left:588px;top:322px;width:744px;height:409px;box-sizing:border-box;border:1px solid;border-color:#fff #696969 #696969 #fff"><div style="width:100%;height:100%;box-sizing:border-box;border:1px solid;border-color:#e3e3e3 #a0a0a0 #a0a0a0 #e3e3e3"></div></div>
<div class="b" style="left:590px;top:302px;width:87px;height:20px;box-sizing:border-box;background:#f0f0f0;border:1px solid;border-color:#fff #696969 #f0f0f0 #fff;border-bottom:0;border-radius:2px 2px 0 0"><div style="width:100%;height:100%;box-sizing:border-box;border:1px solid;border-color:#e3e3e3 #a0a0a0 #f0f0f0 #e3e3e3;border-bottom:0;border-radius:1px 1px 0 0"></div></div>
<span class="t" style="top:306px;font-size:12.3px;color:#000;left:596.7px;transform:scaleX(0.9916);transform-origin:0 50%;">Main Settings</span>
<div class="b" style="left:788px;top:302px;width:123px;height:20px;box-sizing:border-box;background:#f0f0f0;border:1px solid;border-color:#fff #696969 #f0f0f0 #fff;border-bottom:0;border-radius:2px 2px 0 0"><div style="width:100%;height:100%;box-sizing:border-box;border:1px solid;border-color:#e3e3e3 #a0a0a0 #f0f0f0 #e3e3e3;border-bottom:0;border-radius:1px 1px 0 0"></div></div>
<span class="t" style="top:306px;font-size:12.3px;color:#000;left:795px;transform:scaleX(0.9732);transform-origin:0 50%;">Advanced Settings 2</span>
<div class="b" style="left:911px;top:302px;width:122px;height:20px;box-sizing:border-box;background:#f0f0f0;border:1px solid;border-color:#fff #696969 #f0f0f0 #fff;border-bottom:0;border-radius:2px 2px 0 0"><div style="width:100%;height:100%;box-sizing:border-box;border:1px solid;border-color:#e3e3e3 #a0a0a0 #f0f0f0 #e3e3e3;border-bottom:0;border-radius:1px 1px 0 0"></div></div>
<span class="t" style="top:306px;font-size:12.3px;color:#000;left:917px;transform:scaleX(0.9723);transform-origin:0 50%;">Advanced Settings 3</span>
<div class="b" style="left:1033px;top:302px;width:42px;height:20px;box-sizing:border-box;background:#f0f0f0;border:1px solid;border-color:#fff #696969 #f0f0f0 #fff;border-bottom:0;border-radius:2px 2px 0 0"><div style="width:100%;height:100%;box-sizing:border-box;border:1px solid;border-color:#e3e3e3 #a0a0a0 #f0f0f0 #e3e3e3;border-bottom:0;border-radius:1px 1px 0 0"></div></div>
<span class="t" style="top:306px;font-size:12.3px;color:#000;left:1038.8px;transform:scaleX(0.9541);transform-origin:0 50%;">Alerts</span>
<div class="b" style="left:675px;top:300px;width:116px;height:23px;box-sizing:border-box;background:#f0f0f0;border:1px solid;border-color:#fff #696969 #f0f0f0 #fff;border-bottom:0;border-radius:2px 2px 0 0"><div style="width:100%;height:100%;box-sizing:border-box;border:1px solid;border-color:#e3e3e3 #a0a0a0 #f0f0f0 #e3e3e3;border-bottom:0;border-radius:1px 1px 0 0"></div></div>
<span class="t" style="top:304px;font-size:12.3px;color:#000;left:682.8px;transform:scaleX(0.973);transform-origin:0 50%;">Advanced Settings</span>
<div class="b sk" style="left:602px;top:338px;width:13px;height:13px;"><div style="background:#fff"></div></div>
<span class="t" style="top:338px;font-size:12.3px;color:#000;left:620.3px;transform:scaleX(1.0017);transform-origin:0 50%;">Display Region Dividing Lines</span>
<div class="b" style="left:619px;top:337px;width:165px;height:15px;box-sizing:border-box;border:1px dotted #000"></div>
<div class="b sk" style="left:602px;top:361px;width:13px;height:13px;"><div style="background:#fff"></div><svg width="7" height="7" viewBox="0 0 7 7" shape-rendering="crispEdges" style="position:absolute;left:2px;top:2px"><path d="M0 2h1v1h1v1h1v-1h1v-1h1v-1h1v-1h1v3h-1v1h-1v1h-1v1h-1v1h-1v-1h-1v-1h-1z" fill="#000"/></svg></div>
<span class="t" style="top:361px;font-size:12.3px;color:#000;left:620.3px;transform:scaleX(0.9948);transform-origin:0 50%;">Display Main Price Graph Values in Values Windows</span>
<div class="b sk" style="left:602px;top:383px;width:13px;height:13px;"><div style="background:#fff"></div></div>
<span class="t" style="top:383px;font-size:12.3px;color:#000;left:620.3px;transform:scaleX(1.0038);transform-origin:0 50%;">Draw Non-Highlight Drawings Underneath Main Graph and Studies</span>
<div class="b sk" style="left:602px;top:406px;width:13px;height:13px;"><div style="background:#fff"></div><svg width="7" height="7" viewBox="0 0 7 7" shape-rendering="crispEdges" style="position:absolute;left:2px;top:2px"><path d="M0 2h1v1h1v1h1v-1h1v-1h1v-1h1v-1h1v3h-1v1h-1v1h-1v1h-1v1h-1v-1h-1v-1h-1z" fill="#000"/></svg></div>
<span class="t" style="top:406px;font-size:12.3px;color:#000;left:620.3px;transform:scaleX(1.0032);transform-origin:0 50%;">Draw Highlight Drawings Underneath Main Graph and Studies</span>
<div class="b sk" style="left:602px;top:428px;width:13px;height:13px;"><div style="background:#fff"></div></div>
<span class="t" style="top:427px;font-size:12.3px;color:#000;left:620.3px;transform:scaleX(0.9814);transform-origin:0 50%;">Draw Advanced Custom Study Drawings Above Other Drawings</span>
<div class="b sk" style="left:602px;top:451px;width:13px;height:13px;"><div style="background:#fff"></div></div>
<span class="t" style="top:451px;font-size:12.3px;color:#000;left:620.3px;transform:scaleX(0.9834);transform-origin:0 50%;">Draw Horizontal/Vertical Grid Above Graphs</span>
<div class="b sk" style="left:602px;top:475px;width:13px;height:13px;"><div style="background:#fff"></div><svg width="7" height="7" viewBox="0 0 7 7" shape-rendering="crispEdges" style="position:absolute;left:2px;top:2px"><path d="M0 2h1v1h1v1h1v-1h1v-1h1v-1h1v-1h1v3h-1v1h-1v1h-1v1h-1v1h-1v-1h-1v-1h-1z" fill="#000"/></svg></div>
<span class="t" style="top:475px;font-size:12.3px;color:#000;left:620.3px;transform:scaleX(1.0036);transform-origin:0 50%;">Highlight Timescale Dates, Months and Years</span>
<div class="b sk" style="left:602px;top:498px;width:13px;height:13px;"><div style="background:#fff"></div><svg width="7" height="7" viewBox="0 0 7 7" shape-rendering="crispEdges" style="position:absolute;left:2px;top:2px"><path d="M0 2h1v1h1v1h1v-1h1v-1h1v-1h1v-1h1v3h-1v1h-1v1h-1v1h-1v1h-1v-1h-1v-1h-1z" fill="#000"/></svg></div>
<span class="t" style="top:498px;font-size:12.3px;color:#000;left:620.3px;transform:scaleX(0.9894);transform-origin:0 50%;">Adjust Tool Values to Tick Size</span>
<div class="b sk" style="left:602px;top:552px;width:13px;height:13px;"><div style="background:#fff"></div><svg width="7" height="7" viewBox="0 0 7 7" shape-rendering="crispEdges" style="position:absolute;left:2px;top:2px"><path d="M0 2h1v1h1v1h1v-1h1v-1h1v-1h1v-1h1v3h-1v1h-1v1h-1v1h-1v1h-1v-1h-1v-1h-1z" fill="#000"/></svg></div>
<span class="t" style="top:552px;font-size:12.3px;color:#000;left:620.3px;transform:scaleX(0.993);transform-origin:0 50%;">Split Data Records (Applies to NumberOfTrades, Volume and Range Bars)</span>
<div class="b sk" style="left:602px;top:576px;width:13px;height:13px;"><div style="background:#fff"></div></div>
<span class="t" style="top:576px;font-size:12.3px;color:#000;left:620.3px;transform:scaleX(0.9999);transform-origin:0 50%;">Disable Data File Updating</span>
<div class="b sk" style="left:602px;top:599px;width:13px;height:13px;"><div style="background:#fff"></div></div>
<span class="t" style="top:598px;font-size:12.3px;color:#000;left:620.3px;transform:scaleX(0.9846);transform-origin:0 50%;">Allow Zero Values</span>
<div class="b sk" style="left:602px;top:623px;width:13px;height:13px;"><div style="background:#fff"></div></div>
<span class="t" style="top:623px;font-size:12.3px;color:#000;left:620.3px;transform:scaleX(0.9781);transform-origin:0 50%;">Apply Intraday Session Times To Intraday Chart</span>
<div class="b sk" style="left:602px;top:648px;width:13px;height:13px;"><div style="background:#fff"></div></div>
<span class="t" style="top:647px;font-size:12.3px;color:#000;left:620.3px;transform:scaleX(0.9974);transform-origin:0 50%;">Combine Sun-Mon Daily Bars</span>
<div class="b sk" style="left:847px;top:338px;width:13px;height:13px;"><div style="background:#fff"></div></div>
<span class="t" style="top:338px;font-size:12.3px;color:#000;left:865.3px;transform:scaleX(0.9849);transform-origin:0 50%;">Use Left Side Scale</span>
<div class="b rs" style="left:933px;top:357px;width:70px;height:22px;"><div></div></div>
<span class="t" style="top:360px;font-size:12.3px;color:#000;left:818.0px;width:300px;text-align:center;transform:scaleX(0.9765);transform-origin:50% 50%;">Settings</span>
<div class="b sk" style="left:945px;top:475px;width:13px;height:13px;"><div style="background:#fff"></div><svg width="7" height="7" viewBox="0 0 7 7" shape-rendering="crispEdges" style="position:absolute;left:2px;top:2px"><path d="M0 2h1v1h1v1h1v-1h1v-1h1v-1h1v-1h1v3h-1v1h-1v1h-1v1h-1v1h-1v-1h-1v-1h-1z" fill="#000"/></svg></div>
<span class="t" style="top:475px;font-size:12.3px;color:#000;left:963.6px;transform:scaleX(0.9843);transform-origin:0 50%;">Lock Fill Space</span>
<span class="t" style="top:498px;font-size:12.3px;color:#000;left:809.4px;transform:scaleX(0.9887);transform-origin:0 50%;">Historical Pullback Data:</span>
<div class="b sk" style="left:944px;top:495px;width:106px;height:23px;"><div style="background:#fff"></div></div>
<div class="b" style="left:948.5px;top:500px;width:82.5px;height:16px;overflow:hidden"><span class="t" style="left:0;top:0;font-size:12.3px;transform:scaleX(0.9809);transform-origin:0 50%;">Reset and Accumulate</span></div>
<div class="b rs" style="left:1031px;top:497px;width:17px;height:19px;"><div></div></div>
<svg class="b" style="left:1036.0px;top:505px" width="7" height="4" viewBox="0 0 7 4" shape-rendering="crispEdges"><path d="M0 0h7v1h-1v1h-1v1h-1v1h-1v-1h-1v-1h-1v-1h-1z" fill="#000"/></svg>
<span class="t" style="top:526px;font-size:12.3px;color:#000;left:605px;transform:scaleX(0.9753);transform-origin:0 50%;">Continuous Contract:</span>
<div class="b sk" style="left:725px;top:523px;width:325px;height:23px;"><div style="background:#fff"></div></div>
<div class="b" style="left:729px;top:528px;width:302px;height:16px;overflow:hidden"><span class="t" style="left:0;top:0;font-size:12.3px;transform:scaleX(0.9877);transform-origin:0 50%;">Continuous Futures Contract - Volume Based Rollover, Back Adjusted</span></div>
<div class="b rs" style="left:1031px;top:525px;width:17px;height:19px;"><div></div></div>
<svg class="b" style="left:1036.0px;top:533px" width="7" height="4" viewBox="0 0 7 4" shape-rendering="crispEdges"><path d="M0 0h7v1h-1v1h-1v1h-1v1h-1v-1h-1v-1h-1v-1h-1z" fill="#000"/></svg>
<div class="b sk" style="left:784px;top:576px;width:13px;height:13px;"><div style="background:#fff"></div><svg width="7" height="7" viewBox="0 0 7 7" shape-rendering="crispEdges" style="position:absolute;left:2px;top:2px"><path d="M0 2h1v1h1v1h1v-1h1v-1h1v-1h1v-1h1v3h-1v1h-1v1h-1v1h-1v1h-1v-1h-1v-1h-1z" fill="#000"/></svg></div>
<span class="t" style="top:576px;font-size:12.3px;color:#000;left:802px;transform:scaleX(0.9975);transform-origin:0 50%;">Allow Real-Time Updating of Historical Chart</span>
<div class="b sk" style="left:783px;top:597px;width:13px;height:13px;"><div style="background:#fff"></div></div>
<span class="t" style="top:597px;font-size:12.3px;color:#000;left:801.3px;transform:scaleX(1.0);transform-origin:0 50%;">Hide Values Scale</span>
<div class="b sk" style="left:944px;top:597px;width:13px;height:13px;"><div style="background:#fff"></div></div>
<span class="t" style="top:597px;font-size:12.3px;color:#000;left:962px;transform:scaleX(1.0161);transform-origin:0 50%;">Hide Time Scale</span>
<span class="t" style="top:649px;font-size:12.3px;color:#000;left:807px;transform:scaleX(0.9918);transform-origin:0 50%;">Number Of Forward Columns:</span>
<div class="b sk" style="left:980px;top:645px;width:70px;height:23px;"><div style="background:#fff"></div></div>
<span class="t" style="top:649px;font-size:12.3px;color:#000;left:983.7px;transform:scaleX(0.9794);transform-origin:0 50%;">150</span>
<span class="t" style="top:683px;font-size:12.3px;color:#000;left:606.2px;transform:scaleX(0.9944);transform-origin:0 50%;">Time Zone:</span>
<div class="b sk" style="left:611px;top:703px;width:267px;height:23px;"><div style="background:#fff"></div></div>
<div class="b" style="left:615.3px;top:708px;width:243.70000000000005px;height:16px;overflow:hidden"><span class="t" style="left:0;top:0;font-size:12.3px;transform:scaleX(0.9728);transform-origin:0 50%;">New York (-5 EST/-4 EDT)</span></div>
<div class="b rs" style="left:859px;top:705px;width:17px;height:19px;"><div></div></div>
<svg class="b" style="left:864.0px;top:713px" width="7" height="4" viewBox="0 0 7 4" shape-rendering="crispEdges"><path d="M0 0h7v1h-1v1h-1v1h-1v1h-1v-1h-1v-1h-1v-1h-1z" fill="#000"/></svg>
<span class="t" style="top:683px;font-size:12.3px;color:#000;left:954px;transform:scaleX(0.9843);transform-origin:0 50%;">Chart Region:</span>
<div class="b sk" style="left:954px;top:703px;width:96px;height:23px;"><div style="background:#fff"></div></div>
<div class="b" style="left:958px;top:708px;width:73px;height:16px;overflow:hidden"><span class="t" style="left:0;top:0;font-size:12.3px;">1</span></div>
<div class="b rs" style="left:1031px;top:705px;width:17px;height:19px;"><div></div></div>
<svg class="b" style="left:1036.0px;top:713px" width="7" height="4" viewBox="0 0 7 4" shape-rendering="crispEdges"><path d="M0 0h7v1h-1v1h-1v1h-1v1h-1v-1h-1v-1h-1v-1h-1z" fill="#000"/></svg>
<div class="b" style="left:1022px;top:336px;width:300px;height:93px;border:1px solid #fff;box-sizing:border-box"></div>
<div class="b" style="left:1021px;top:335px;width:300px;height:93px;border:1px solid #a0a0a0;box-sizing:border-box"></div>
<div class="b sk" style="left:1028px;top:344px;width:13px;height:13px;"><div style="background:#fff"></div></div>
<span class="t" style="top:344px;font-size:12.3px;color:#000;left:1046.3px;transform:scaleX(0.9883);transform-origin:0 50%;">Include Columns With No Data</span>
<div class="b sk" style="left:1028px;top:366px;width:13px;height:13px;"><div style="background:#fff"></div></div>
<span class="t" style="top:366px;font-size:12.3px;color:#000;left:1046.3px;transform:scaleX(0.9869);transform-origin:0 50%;">Do Not Draw Columns With No Data</span>
<div class="b sk" style="left:1028px;top:389px;width:13px;height:13px;"><div style="background:#fff"></div></div>
<span class="t" style="top:389px;font-size:12.3px;color:#000;left:1046.3px;transform:scaleX(0.991);transform-origin:0 50%;">Include Weekend Columns Before First Trade</span>
<div class="b sk" style="left:1028px;top:410px;width:13px;height:13px;"><div style="background:#fff"></div></div>
<span class="t" style="top:409px;font-size:12.3px;color:#000;left:1046.3px;transform:scaleX(0.9755);transform-origin:0 50%;">Include Sat-Sun Bars For Daily Charts</span>
<div class="b sk" style="left:1073px;top:436px;width:13px;height:13px;"><div style="background:#fff"></div></div>
<span class="t" style="top:436px;font-size:12.3px;color:#000;left:1091.4px;transform:scaleX(0.9824);transform-origin:0 50%;">Attach Trade Window to Right Side</span>
<div class="b sk" style="left:1073px;top:456px;width:13px;height:13px;"><div style="background:#fff"></div></div>
<span class="t" style="top:456px;font-size:12.3px;color:#000;left:1091.4px;transform:scaleX(0.9788);transform-origin:0 50%;">Align Order Cancel (X) Button to Right</span>
<span class="t" style="top:481px;font-size:12.3px;color:#000;left:1082.3px;transform:scaleX(0.993);transform-origin:0 50%;">Trade Drawings Left Align</span>
<div class="b sk" style="left:1250px;top:476px;width:63px;height:23px;"><div style="background:#fff"></div></div>
<span class="t" style="top:480px;font-size:12.3px;color:#000;left:1254px;transform:scaleX(0.9599);transform-origin:0 50%;">100</span>
<div class="b sk" style="left:1073px;top:505px;width:13px;height:13px;"><div style="background:#fff"></div></div>
<span class="t" style="top:505px;font-size:12.3px;color:#000;left:1091.4px;transform:scaleX(0.9975);transform-origin:0 50%;">Align Trade Drawings Text to Right</span>
<div class="b sk" style="left:1073px;top:526px;width:13px;height:13px;"><div style="background:#fff"></div></div>
<span class="t" style="top:526px;font-size:12.3px;color:#000;left:1091.4px;transform:scaleX(1.0018);transform-origin:0 50%;">Transparent Trade Drawings</span>
<div class="b sk" style="left:1073px;top:546px;width:13px;height:13px;"><div style="background:#fff"></div><svg width="7" height="7" viewBox="0 0 7 7" shape-rendering="crispEdges" style="position:absolute;left:2px;top:2px"><path d="M0 2h1v1h1v1h1v-1h1v-1h1v-1h1v-1h1v3h-1v1h-1v1h-1v1h-1v1h-1v-1h-1v-1h-1z" fill="#000"/></svg></div>
<span class="t" style="top:545px;font-size:12.3px;color:#000;left:1091.4px;transform:scaleX(0.973);transform-origin:0 50%;">Load Order Fills for Current Day Only</span>
<span class="t" style="top:567px;font-size:12.3px;color:#000;left:1074.9px;transform:scaleX(0.9888);transform-origin:0 50%;">Order Fills Start Date-Time (blank for all):</span>
<div class="b sk" style="left:1073px;top:585px;width:117px;height:23px;"><div style="background:#fff"></div></div>
<div class="b sk" style="left:1197px;top:585px;width:117px;height:23px;"><div style="background:#fff"></div></div>
<span class="t" style="top:618px;font-size:12.3px;color:#000;left:1073.2px;transform:scaleX(0.976);transform-origin:0 50%;">Profit/Loss Format:</span>
<div class="b sk" style="left:1192px;top:615px;width:130px;height:23px;"><div style="background:#fff"></div></div>
<div class="b" style="left:1196px;top:620px;width:107px;height:16px;overflow:hidden"><span class="t" style="left:0;top:0;font-size:12.3px;transform:scaleX(0.9670);transform-origin:0 50%;">Ticks (T)</span></div>
<div class="b rs" style="left:1303px;top:617px;width:17px;height:19px;"><div></div></div>
<svg class="b" style="left:1308.0px;top:625px" width="7" height="4" viewBox="0 0 7 4" shape-rendering="crispEdges"><path d="M0 0h7v1h-1v1h-1v1h-1v1h-1v-1h-1v-1h-1v-1h-1z" fill="#000"/></svg>
<div class="b rs" style="left:1073px;top:647px;width:249px;height:23px;"><div></div></div>
<span class="t" style="top:651px;font-size:12.3px;color:#000;left:1047.65px;width:300px;text-align:center;transform:scaleX(0.9943);transform-origin:50% 50%;">Set Dates To Exclude</span>
<span class="t" style="top:694px;font-size:12.3px;color:#000;left:1073px;transform:scaleX(0.9695);transform-origin:0 50%;">Chart Update Interval In</span>
<span class="t" style="top:709px;font-size:12.3px;color:#000;left:1073.1px;transform:scaleX(1.0013);transform-origin:0 50%;">Milliseconds (0=Use Global):</span>
<div class="b sk" style="left:1252px;top:699px;width:70px;height:23px;"><div style="background:#fff"></div></div>
<span class="t" style="top:703px;font-size:12.3px;color:#000;left:1255.6px;transform:scaleX(0.9209);transform-origin:0 50%;">0</span>
<div class="b" style="left:588px;top:734px;width:86px;height:26px;background:#646464"></div>
<div class="b rs" style="left:589px;top:735px;width:84px;height:24px;"><div></div></div>
<span class="t" style="top:740px;font-size:12.3px;color:#000;left:480.45000000000005px;width:300px;text-align:center;transform:scaleX(0.9284);transform-origin:50% 50%;">OK</span>
<div class="b rs" style="left:681px;top:735px;width:86px;height:24px;"><div></div></div>
<span class="t" style="top:740px;font-size:12.3px;color:#000;left:573.75px;width:300px;text-align:center;transform:scaleX(0.9846);transform-origin:50% 50%;">Cancel</span>
<div class="b rs" style="left:774px;top:735px;width:86px;height:24px;"><div></div></div>
<span class="t" style="top:740px;font-size:12.3px;color:#000;left:666.6px;width:300px;text-align:center;transform:scaleX(0.9685);transform-origin:50% 50%;">Apply</span>
<div class="b rs" style="left:867px;top:735px;width:86px;height:24px;"><div></div></div>
<span class="t" style="top:740px;font-size:12.3px;color:#000;left:760.1px;width:300px;text-align:center;transform:scaleX(1.0278);transform-origin:50% 50%;">Help</span>
</body></html>
